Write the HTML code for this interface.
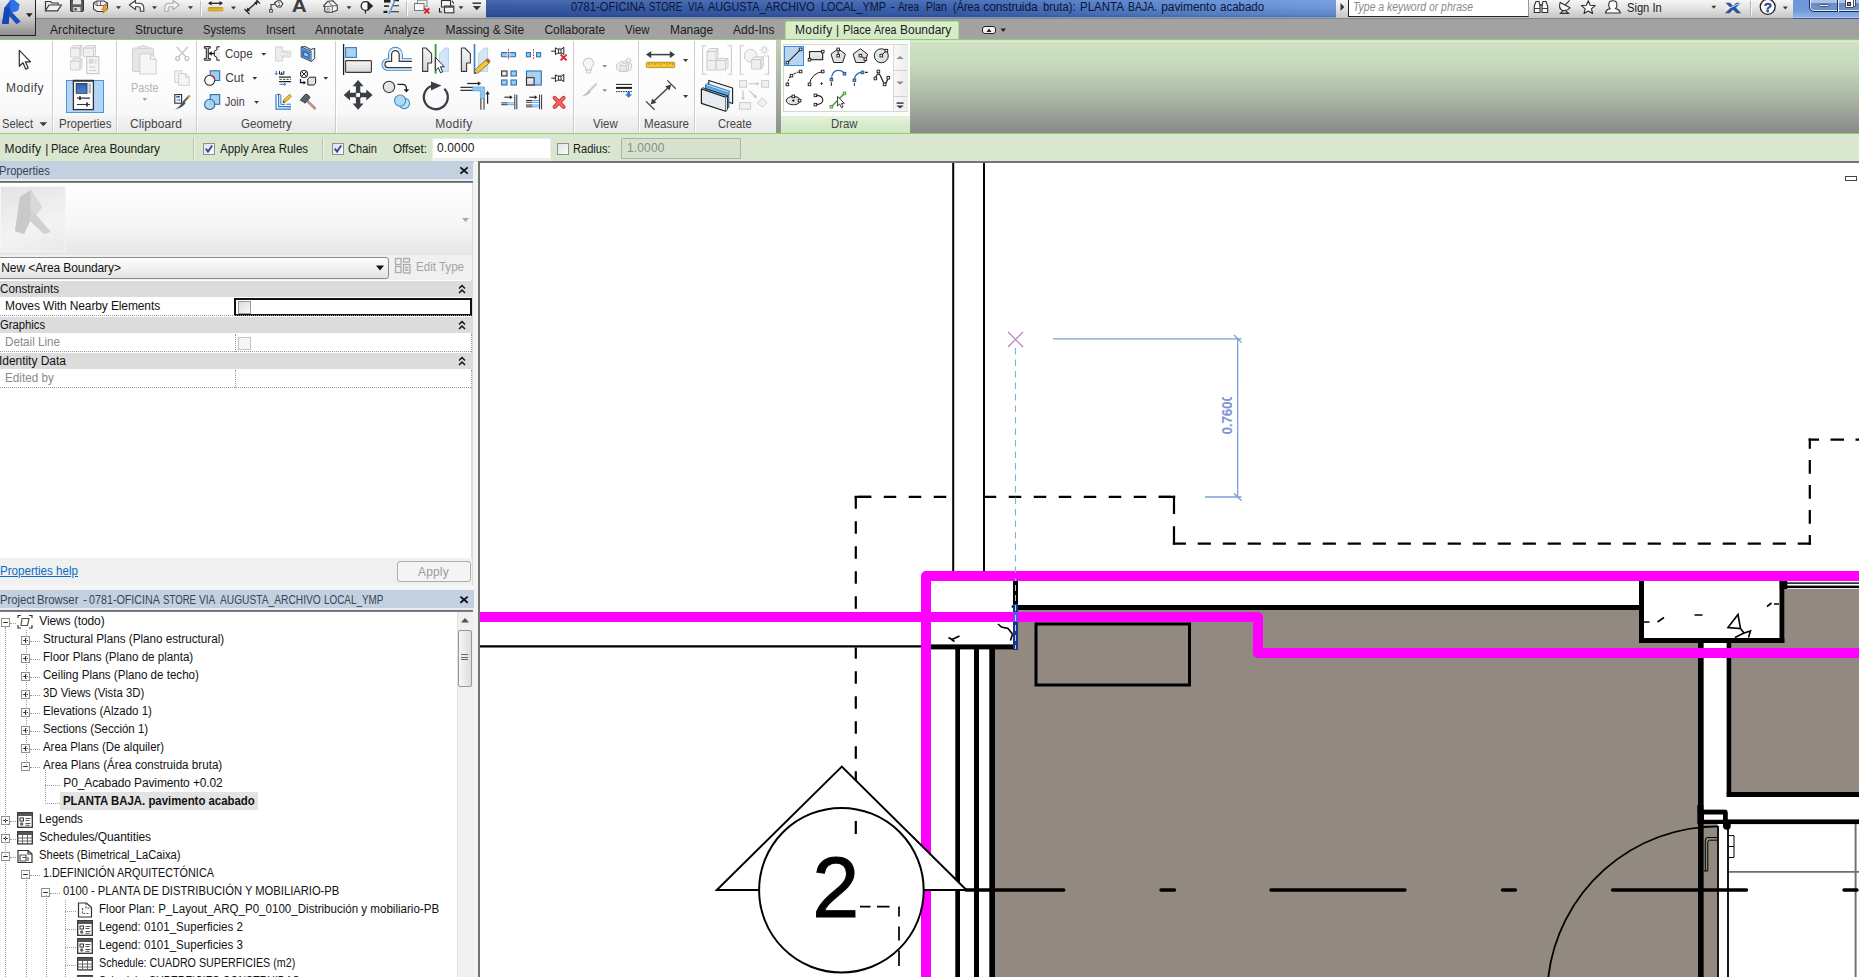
<!DOCTYPE html>
<html><head><meta charset="utf-8"><title>Autodesk Revit</title>
<style>
html,body{margin:0;padding:0;}
body{width:1859px;height:977px;overflow:hidden;position:relative;background:#fff;font-family:"Liberation Sans",sans-serif;}
.t{position:absolute;white-space:nowrap;}
svg{position:absolute;overflow:hidden;}
svg text{font-family:"Liberation Sans",sans-serif;}
</style></head><body>
<div style="position:absolute;left:0px;top:0px;width:1859px;height:18px;background:linear-gradient(#f6f6f6,#e4e4e4 45%,#c4c4c4);"></div>
<div style="position:absolute;left:0px;top:18px;width:1859px;height:22px;background:#a2a2a2;"></div>
<div style="position:absolute;left:0px;top:18px;width:1859px;height:1px;background:#858585;"></div>
<div style="position:absolute;left:486px;top:0px;width:850px;height:18px;background:linear-gradient(90deg,#3558a4 0%,#3b62b0 55%,#5d8ad2 85%,#6c97da 100%);"></div>
<div style="position:absolute;left:486px;top:0px;width:850px;height:18px;background:linear-gradient(rgba(255,255,255,.10),rgba(255,255,255,0) 45%,rgba(0,0,30,.10) 80%,rgba(0,0,40,.28));"></div>
<div style="position:absolute;left:486px;top:16.6px;width:850px;height:1.4px;background:#8fb0e4;opacity:.75;"></div>
<span class="t" style="left:570.80px;top:-1.00px;font-size:12px;line-height:16px;color:#0c1530;transform:scaleX(0.9352);transform-origin:0 0;">0781-OFICINA</span>
<span class="t" style="left:649.20px;top:-1.00px;font-size:12px;line-height:16px;color:#0c1530;transform:scaleX(0.8100);transform-origin:0 0;">STORE</span>
<span class="t" style="left:687.50px;top:-1.00px;font-size:12px;line-height:16px;color:#0c1530;transform:scaleX(0.8175);transform-origin:0 0;">VIA</span>
<span class="t" style="left:708.30px;top:-1.00px;font-size:12px;line-height:16px;color:#0c1530;transform:scaleX(0.9008);transform-origin:0 0;">AUGUSTA_ARCHIVO</span>
<span class="t" style="left:820.80px;top:-1.00px;font-size:12px;line-height:16px;color:#0c1530;transform:scaleX(0.9026);transform-origin:0 0;">LOCAL_YMP</span>
<span class="t" style="left:890.80px;top:-1.00px;font-size:12px;line-height:16px;color:#0c1530;">-</span>
<span class="t" style="left:898.30px;top:-1.00px;font-size:12px;line-height:16px;color:#0c1530;transform:scaleX(0.8247);transform-origin:0 0;">Area</span>
<span class="t" style="left:925.80px;top:-1.00px;font-size:12px;line-height:16px;color:#0c1530;transform:scaleX(0.8703);transform-origin:0 0;">Plan</span>
<span class="t" style="left:952.50px;top:-1.00px;font-size:12px;line-height:16px;color:#0c1530;transform:scaleX(0.9099);transform-origin:0 0;">(Área</span>
<span class="t" style="left:983.30px;top:-1.00px;font-size:12px;line-height:16px;color:#0c1530;letter-spacing:-0.116px;">construida</span>
<span class="t" style="left:1042.50px;top:-1.00px;font-size:12px;line-height:16px;color:#0c1530;transform:scaleX(0.9374);transform-origin:0 0;">bruta):</span>
<span class="t" style="left:1079.60px;top:-1.00px;font-size:12px;line-height:16px;color:#0c1530;transform:scaleX(0.9589);transform-origin:0 0;">PLANTA</span>
<span class="t" style="left:1127.80px;top:-1.00px;font-size:12px;line-height:16px;color:#0c1530;transform:scaleX(0.8731);transform-origin:0 0;">BAJA.</span>
<span class="t" style="left:1161.20px;top:-1.00px;font-size:12px;line-height:16px;color:#0c1530;letter-spacing:-0.062px;">pavimento</span>
<span class="t" style="left:1220.40px;top:-1.00px;font-size:12px;line-height:16px;color:#0c1530;transform:scaleX(0.9580);transform-origin:0 0;">acabado</span>
<div style="position:absolute;left:1348px;top:-2px;width:179px;height:17px;background:#fff;border:1px solid #222;border-right-color:#999;"></div>
<span class="t" style="left:1353.00px;top:-1.00px;font-size:12px;line-height:16px;color:#8a8a8a;transform:scaleX(0.8707);transform-origin:0 0;font-style:italic;">Type a keyword or phrase</span>
<span class="t" style="left:1626.70px;top:0.00px;font-size:12px;line-height:16px;color:#1a1a1a;transform:scaleX(0.9292);transform-origin:0 0;">Sign In</span>
<div style="position:absolute;left:1792.5px;top:0px;width:66.5px;height:18px;background:linear-gradient(#6d95d7,#6f98d9 55%,#8db1e6 92%,#b9d0f0);"></div>
<div style="position:absolute;left:1792.5px;top:18px;width:66.5px;height:1px;background:#3c5a94;"></div>
<div style="position:absolute;left:1808.8px;top:-6px;width:60px;height:18.4px;border:1px solid #1e2f56;border-radius:5px;background:linear-gradient(#b4c9ea 0,#a9c0e5 50%,#6a8bc4 51%,#7194cc);box-shadow:inset 0 0 0 1px rgba(255,255,255,.75);box-sizing:border-box;"></div>
<div style="position:absolute;left:1837.2px;top:0px;width:1px;height:11.5px;background:#1e2f56;"></div>
<div style="position:absolute;left:1838.2px;top:0px;width:1px;height:11.5px;background:rgba(255,255,255,.8);"></div>
<div style="position:absolute;left:1818.7px;top:3.6px;width:10.8px;height:3.9px;background:#fff;border:1px solid #3b4a68;border-radius:1.5px;box-sizing:border-box;"></div>
<div style="position:absolute;left:1848.2px;top:-3px;width:8px;height:10.2px;background:#fff;border:1px solid #3b4a68;border-radius:1px;box-sizing:border-box;"></div>
<div style="position:absolute;left:1845px;top:-3px;width:9px;height:11.2px;background:#fff;border:1px solid #3b4a68;border-radius:1px;box-sizing:border-box;"></div>
<div style="position:absolute;left:1847.4px;top:2.2px;width:3.6px;height:3.6px;background:#8a8a8a;border:1px solid #333;box-sizing:border-box;"></div>
<div style="position:absolute;left:0px;top:0px;width:35px;height:35px;background:linear-gradient(#e9e9e9,#cfcfcf 45%,#8f8f8f);border-right:1px solid #222;border-bottom:1px solid #222;"></div>
<span class="t" style="left:50.00px;top:22.00px;font-size:12px;line-height:16px;color:#1c1c1c;letter-spacing:0.082px;">Architecture</span>
<span class="t" style="left:135.00px;top:22.00px;font-size:12px;line-height:16px;color:#1c1c1c;letter-spacing:-0.075px;">Structure</span>
<span class="t" style="left:203.00px;top:22.00px;font-size:12px;line-height:16px;color:#1c1c1c;transform:scaleX(0.9239);transform-origin:0 0;">Systems</span>
<span class="t" style="left:265.50px;top:22.00px;font-size:12px;line-height:16px;color:#1c1c1c;transform:scaleX(0.9667);transform-origin:0 0;">Insert</span>
<span class="t" style="left:315.00px;top:22.00px;font-size:12px;line-height:16px;color:#1c1c1c;letter-spacing:0.123px;">Annotate</span>
<span class="t" style="left:384.00px;top:22.00px;font-size:12px;line-height:16px;color:#1c1c1c;transform:scaleX(0.9488);transform-origin:0 0;">Analyze</span>
<span class="t" style="left:445.50px;top:22.00px;font-size:12px;line-height:16px;color:#1c1c1c;letter-spacing:-0.108px;">Massing &amp; Site</span>
<span class="t" style="left:544.50px;top:22.00px;font-size:12px;line-height:16px;color:#1c1c1c;letter-spacing:-0.080px;">Collaborate</span>
<span class="t" style="left:625.00px;top:22.00px;font-size:12px;line-height:16px;color:#1c1c1c;transform:scaleX(0.9497);transform-origin:0 0;">View</span>
<span class="t" style="left:670.00px;top:22.00px;font-size:12px;line-height:16px;color:#1c1c1c;letter-spacing:-0.060px;">Manage</span>
<span class="t" style="left:733.00px;top:22.00px;font-size:12px;line-height:16px;color:#1c1c1c;letter-spacing:0.022px;">Add-Ins</span>
<div style="position:absolute;left:785px;top:21px;width:174px;height:19px;background:linear-gradient(#d9efcd,#d2e9c5);border:1.5px solid #a5e187;border-bottom:none;border-radius:2px 2px 0 0;box-sizing:border-box;"></div>
<span class="t" style="left:795.00px;top:22.00px;font-size:12px;line-height:16px;color:#1c1c1c;letter-spacing:0.359px;">Modify</span>
<span class="t" style="left:836.00px;top:22.00px;font-size:12px;line-height:16px;color:#1c1c1c;">|</span>
<span class="t" style="left:842.50px;top:22.00px;font-size:12px;line-height:16px;color:#1c1c1c;transform:scaleX(0.9328);transform-origin:0 0;">Place</span>
<span class="t" style="left:873.80px;top:22.00px;font-size:12px;line-height:16px;color:#1c1c1c;transform:scaleX(0.8878);transform-origin:0 0;">Area</span>
<span class="t" style="left:900.00px;top:22.00px;font-size:12px;line-height:16px;color:#1c1c1c;letter-spacing:-0.007px;">Boundary</span>
<div style="position:absolute;left:982px;top:26px;width:14px;height:8px;background:#f4f4f4;border:1px solid #222;border-radius:3px;box-sizing:border-box;"></div>
<svg style="left:980px;top:24px" width="30" height="12"><path d="M6.5 8 L9 4.5 L11.5 8Z" fill="#222"/><path d="M20.5 4.5 L26 4.5 L23.2 8Z" fill="#222"/></svg>
<div style="position:absolute;left:0px;top:38.6px;width:1859px;height:1.6px;background:linear-gradient(#9db894,#92d06f);"></div>
<div style="position:absolute;left:0px;top:40px;width:1859px;height:93px;background:linear-gradient(#d0e5c4 0%,#c6d9bc 25%,#b1bfaa 55%,#9aa197 80%,#8a8a8a 100%);"></div>
<div style="position:absolute;left:0px;top:40.5px;width:1859px;height:1px;background:#dcefd2;"></div>
<div style="position:absolute;left:0px;top:40px;width:776px;height:93px;background:linear-gradient(#ffffff,#fbfbfb 60%,#f4f4f4);"></div>
<div style="position:absolute;left:0px;top:116px;width:776px;height:17px;background:linear-gradient(#f3f3f3,#e9e9e9);"></div>
<div style="position:absolute;left:51.5px;top:41px;width:1px;height:92px;background:#cdcdcd;"></div>
<div style="position:absolute;left:52.5px;top:41px;width:1px;height:92px;background:#ffffff;"></div>
<div style="position:absolute;left:115.5px;top:41px;width:1px;height:92px;background:#cdcdcd;"></div>
<div style="position:absolute;left:116.5px;top:41px;width:1px;height:92px;background:#ffffff;"></div>
<div style="position:absolute;left:195.5px;top:41px;width:1px;height:92px;background:#cdcdcd;"></div>
<div style="position:absolute;left:196.5px;top:41px;width:1px;height:92px;background:#ffffff;"></div>
<div style="position:absolute;left:334.5px;top:41px;width:1px;height:92px;background:#cdcdcd;"></div>
<div style="position:absolute;left:335.5px;top:41px;width:1px;height:92px;background:#ffffff;"></div>
<div style="position:absolute;left:573.0px;top:41px;width:1px;height:92px;background:#cdcdcd;"></div>
<div style="position:absolute;left:574.0px;top:41px;width:1px;height:92px;background:#ffffff;"></div>
<div style="position:absolute;left:638.0px;top:41px;width:1px;height:92px;background:#cdcdcd;"></div>
<div style="position:absolute;left:639.0px;top:41px;width:1px;height:92px;background:#ffffff;"></div>
<div style="position:absolute;left:694.0px;top:41px;width:1px;height:92px;background:#cdcdcd;"></div>
<div style="position:absolute;left:695.0px;top:41px;width:1px;height:92px;background:#ffffff;"></div>
<div style="position:absolute;left:776px;top:40px;width:5px;height:93px;background:linear-gradient(#bfd0b6,#a8b3a2 50%,#8f918e);"></div>
<div style="position:absolute;left:781px;top:40px;width:129px;height:93px;background:#fbfdf9;"></div>
<div style="position:absolute;left:781px;top:116px;width:129px;height:17px;background:linear-gradient(#e3f2da,#cfe6c1);"></div>
<div style="position:absolute;left:782.5px;top:44px;width:125.5px;height:67.5px;background:#fff;border:1px solid #d6d6d6;box-sizing:border-box;"></div>
<div style="position:absolute;left:893px;top:45px;width:14px;height:65.5px;background:linear-gradient(90deg,#f8f8f8,#ececec);border-left:1px solid #dcdcdc;"></div>
<div style="position:absolute;left:893px;top:69.5px;width:14px;height:1px;background:#d0d0d0;"></div>
<div style="position:absolute;left:893px;top:96px;width:14px;height:1px;background:#d0d0d0;"></div>
<div style="position:absolute;left:784px;top:46px;width:20px;height:20px;background:#b8d6f2;border:1px solid #3c8ad8;box-sizing:border-box;"></div>
<div style="position:absolute;left:66px;top:79.5px;width:38px;height:33.5px;background:#b4d5f5;border:1px solid #4a96de;box-sizing:border-box;"></div>
<div style="position:absolute;left:0px;top:132.5px;width:1859px;height:1.5px;background:#8fd46b;"></div>
<span class="t" style="left:2.00px;top:116.00px;font-size:12px;line-height:16px;color:#454545;transform:scaleX(0.9297);transform-origin:0 0;">Select</span>
<span class="t" style="left:58.50px;top:116.00px;font-size:12px;line-height:16px;color:#454545;transform:scaleX(0.9600);transform-origin:0 0;">Properties</span>
<span class="t" style="left:130.00px;top:116.00px;font-size:12px;line-height:16px;color:#454545;letter-spacing:0.069px;">Clipboard</span>
<span class="t" style="left:240.80px;top:116.00px;font-size:12px;line-height:16px;color:#454545;transform:scaleX(0.9664);transform-origin:0 0;">Geometry</span>
<span class="t" style="left:435.30px;top:116.00px;font-size:12px;line-height:16px;color:#454545;letter-spacing:0.309px;">Modify</span>
<span class="t" style="left:593.30px;top:116.00px;font-size:12px;line-height:16px;color:#454545;transform:scaleX(0.9575);transform-origin:0 0;">View</span>
<span class="t" style="left:644.00px;top:116.00px;font-size:12px;line-height:16px;color:#454545;transform:scaleX(0.9639);transform-origin:0 0;">Measure</span>
<span class="t" style="left:718.30px;top:116.00px;font-size:12px;line-height:16px;color:#454545;transform:scaleX(0.9357);transform-origin:0 0;">Create</span>
<span class="t" style="left:831.30px;top:116.00px;font-size:12px;line-height:16px;color:#454545;transform:scaleX(0.9459);transform-origin:0 0;">Draw</span>
<span class="t" style="left:6.00px;top:80.00px;font-size:12px;line-height:16px;color:#404040;letter-spacing:0.443px;">Modify</span>
<span class="t" style="left:130.50px;top:80.00px;font-size:12px;line-height:16px;color:#b4b4b4;transform:scaleX(0.8966);transform-origin:0 0;">Paste</span>
<span class="t" style="left:225.30px;top:46.20px;font-size:12px;line-height:16px;color:#404040;transform:scaleX(0.9656);transform-origin:0 0;">Cope</span>
<span class="t" style="left:225.30px;top:70.00px;font-size:12px;line-height:16px;color:#404040;letter-spacing:-0.091px;">Cut</span>
<span class="t" style="left:225.30px;top:94.00px;font-size:12px;line-height:16px;color:#404040;transform:scaleX(0.8948);transform-origin:0 0;">Join</span>
<div style="position:absolute;left:0px;top:134px;width:1859px;height:28px;background:#d9e6d0;"></div>
<div style="position:absolute;left:432px;top:159px;width:118.5px;height:2px;background:#eef3ea;"></div>
<span class="t" style="left:4.40px;top:141.00px;font-size:12px;line-height:16px;color:#1a1a1a;letter-spacing:0.259px;">Modify</span>
<span class="t" style="left:45.30px;top:141.00px;font-size:12px;line-height:16px;color:#1a1a1a;">|</span>
<span class="t" style="left:51.30px;top:141.00px;font-size:12px;line-height:16px;color:#1a1a1a;transform:scaleX(0.9362);transform-origin:0 0;">Place</span>
<span class="t" style="left:82.50px;top:141.00px;font-size:12px;line-height:16px;color:#1a1a1a;transform:scaleX(0.9115);transform-origin:0 0;">Area</span>
<span class="t" style="left:109.40px;top:141.00px;font-size:12px;line-height:16px;color:#1a1a1a;letter-spacing:-0.095px;">Boundary</span>
<div style="position:absolute;left:193px;top:138px;width:1px;height:21px;background:#b7c4ae;"></div>
<div style="position:absolute;left:194px;top:138px;width:1px;height:21px;background:#eef5ea;"></div>
<div style="position:absolute;left:322px;top:138px;width:1px;height:21px;background:#b7c4ae;"></div>
<div style="position:absolute;left:323px;top:138px;width:1px;height:21px;background:#eef5ea;"></div>
<div style="position:absolute;left:203px;top:142.5px;width:12px;height:12px;background:linear-gradient(135deg,#dfe3e8,#fbfbfb);border:1px solid #8e8f8f;box-sizing:border-box;"></div>
<svg style="left:203px;top:142.5px" width="12" height="12"><path d="M2.8 5.6 L5 8.6 L9.2 2.6" stroke="#31479a" stroke-width="1.8" fill="none"/></svg>
<span class="t" style="left:219.50px;top:141.00px;font-size:12px;line-height:16px;color:#1a1a1a;transform:scaleX(0.9560);transform-origin:0 0;">Apply Area Rules</span>
<div style="position:absolute;left:332px;top:142.5px;width:12px;height:12px;background:linear-gradient(135deg,#dfe3e8,#fbfbfb);border:1px solid #8e8f8f;box-sizing:border-box;"></div>
<svg style="left:332px;top:142.5px" width="12" height="12"><path d="M2.8 5.6 L5 8.6 L9.2 2.6" stroke="#31479a" stroke-width="1.8" fill="none"/></svg>
<span class="t" style="left:348.00px;top:141.00px;font-size:12px;line-height:16px;color:#1a1a1a;transform:scaleX(0.9248);transform-origin:0 0;">Chain</span>
<span class="t" style="left:393.00px;top:141.00px;font-size:12px;line-height:16px;color:#1a1a1a;transform:scaleX(0.9688);transform-origin:0 0;">Offset:</span>
<div style="position:absolute;left:432px;top:137.5px;width:118.5px;height:21.5px;background:#fff;border:1px solid #e6efe0;box-sizing:border-box;"></div>
<span class="t" style="left:437.00px;top:140.00px;font-size:12px;line-height:16px;color:#1a1a1a;letter-spacing:0.135px;">0.0000</span>
<div style="position:absolute;left:557px;top:142.5px;width:12px;height:12px;background:linear-gradient(135deg,#dfe3e8,#fbfbfb);border:1px solid #8e8f8f;box-sizing:border-box;"></div>
<span class="t" style="left:573.00px;top:141.00px;font-size:12px;line-height:16px;color:#1a1a1a;transform:scaleX(0.9217);transform-origin:0 0;">Radius:</span>
<div style="position:absolute;left:621px;top:137.5px;width:119.5px;height:21.5px;background:#d6e2ce;border:1px solid #aab5a3;box-sizing:border-box;border-radius:1px;"></div>
<span class="t" style="left:627.00px;top:140.00px;font-size:12px;line-height:16px;color:#8c8c8c;letter-spacing:0.135px;">1.0000</span>
<div style="position:absolute;left:0px;top:163px;width:479px;height:814px;background:#f0f0f0;"></div>
<div style="position:absolute;left:0px;top:161px;width:473.6px;height:18.3px;background:#c2d0e0;"></div>
<div style="position:absolute;left:0px;top:179.3px;width:473.6px;height:1.4px;background:#e6ecf2;"></div>
<div style="position:absolute;left:0px;top:180.7px;width:472.7px;height:2px;background:linear-gradient(#5f6266,#8a8d90);"></div>
<span class="t" style="left:-0.80px;top:163.00px;font-size:12px;line-height:16px;color:#3a4452;transform:scaleX(0.9289);transform-origin:0 0;">Properties</span>
<svg style="left:458px;top:165px" width="12" height="12"><path d="M2.4 2.4 L9.7 8.6 M9.7 2.4 L2.4 8.6" stroke="#111" stroke-width="1.9"/></svg>
<div style="position:absolute;left:0px;top:182.5px;width:472px;height:375px;background:#fff;"></div>
<div style="position:absolute;left:471.3px;top:182.7px;width:1.4px;height:407px;background:#dadada;"></div>
<div style="position:absolute;left:473px;top:163px;width:6px;height:814px;background:#f3f3f3;"></div>
<div style="position:absolute;left:0px;top:183px;width:472px;height:71.5px;background:linear-gradient(#ffffff,#f5f5f5 60%,#e6e6e6);"></div>
<div style="position:absolute;left:0px;top:185.5px;width:66px;height:66.5px;background:linear-gradient(160deg,#e3e3e3,#f3f3f3 60%,#e9e9e9);border:1px solid #f6f6f6;box-sizing:border-box;"></div>
<svg style="left:0px;top:185px" width="66" height="67"><path d="M20 12 L31 5 L42 22 L36 30 L51 47 L44 49 L30 36 L24 49 L15 46 Z" fill="#d0d0d0"/><path d="M20 12 L31 5 L30 36 L24 49 L15 46Z" fill="#c9c9c9"/><path d="M31 5 L42 22 L36 30 L30 24Z" fill="#d8d8d8"/></svg>
<svg style="left:460px;top:216px" width="12" height="8"><path d="M2 2 L9 2 L5.5 6Z" fill="#a8a8a8"/></svg>
<div style="position:absolute;left:0px;top:254.5px;width:472px;height:25px;background:#f0f0f0;"></div>
<div style="position:absolute;left:-3px;top:256.5px;width:392px;height:22.5px;background:linear-gradient(#ffffff,#f1f1f1 50%,#e2e2e2);border:1px solid #8a8a8a;border-radius:3px;box-sizing:border-box;"></div>
<span class="t" style="left:1.30px;top:260.30px;font-size:12px;line-height:16px;color:#111;letter-spacing:-0.100px;">New &lt;Area Boundary&gt;</span>
<svg style="left:374px;top:264px" width="12" height="8"><path d="M2 1.5 L10 1.5 L6 6.5Z" fill="#111"/></svg>
<svg style="left:394px;top:257px" width="18" height="18" fill="none" stroke="#ababab" stroke-width="1.3"><rect x="1.5" y="1.5" width="5.5" height="6"/><rect x="1.5" y="9.5" width="5.5" height="6"/><rect x="9.5" y="1.5" width="6" height="3.5"/><rect x="9.5" y="7.5" width="6.5" height="8.5"/><path d="M11 10.5h3.5M11 13h3.5"/></svg>
<span class="t" style="left:416.00px;top:258.50px;font-size:12px;line-height:16px;color:#a4a4a4;transform:scaleX(0.9639);transform-origin:0 0;">Edit Type</span>
<div style="position:absolute;left:0px;top:281px;width:472px;height:16px;background:#dcdcdc;"></div>
<span class="t" style="left:0.00px;top:280.80px;font-size:12px;line-height:16px;color:#111;transform:scaleX(0.9722);transform-origin:0 0;">Constraints</span>
<svg style="left:457px;top:283px" width="10" height="12"><path d="M2 5.5 L5 2.5 L8 5.5 M2 10 L5 7 L8 10" stroke="#111" stroke-width="1.5" fill="none"/></svg>
<div style="position:absolute;left:0px;top:317px;width:472px;height:16px;background:#dcdcdc;"></div>
<span class="t" style="left:0.00px;top:316.80px;font-size:12px;line-height:16px;color:#111;transform:scaleX(0.9372);transform-origin:0 0;">Graphics</span>
<svg style="left:457px;top:319px" width="10" height="12"><path d="M2 5.5 L5 2.5 L8 5.5 M2 10 L5 7 L8 10" stroke="#111" stroke-width="1.5" fill="none"/></svg>
<div style="position:absolute;left:0px;top:353px;width:472px;height:16px;background:#dcdcdc;"></div>
<span class="t" style="left:-1.00px;top:352.80px;font-size:12px;line-height:16px;color:#111;letter-spacing:-0.042px;">Identity Data</span>
<svg style="left:457px;top:355px" width="10" height="12"><path d="M2 5.5 L5 2.5 L8 5.5 M2 10 L5 7 L8 10" stroke="#111" stroke-width="1.5" fill="none"/></svg>
<div style="position:absolute;left:0px;top:297.5px;width:472px;height:17.5px;background:#fff;"></div>
<span class="t" style="left:5.00px;top:298.20px;font-size:12px;line-height:16px;color:#111;letter-spacing:-0.117px;">Moves With Nearby Elements</span>
<div style="position:absolute;left:234px;top:298.0px;width:237.5px;height:17.5px;border:2px solid #111;box-sizing:border-box;background:#fff;"></div>
<div style="position:absolute;left:0px;top:315.0px;width:471px;height:1px;border-top:1px dotted #9a9a9a;"></div>
<div style="position:absolute;left:238px;top:301.0px;width:13px;height:12.5px;background:linear-gradient(135deg,#d9dde2,#f9f9f9);border:1px solid #9a9a9a;box-sizing:border-box;"></div>
<div style="position:absolute;left:0px;top:333.5px;width:472px;height:17.5px;background:#fff;"></div>
<span class="t" style="left:5.00px;top:334.20px;font-size:12px;line-height:16px;color:#8a8a8a;transform:scaleX(0.9700);transform-origin:0 0;">Detail Line</span>
<div style="position:absolute;left:234.5px;top:333.5px;width:1px;height:18px;border-left:1px dotted #9a9a9a;"></div>
<div style="position:absolute;left:470.5px;top:333.5px;width:1px;height:18px;border-left:1px dotted #9a9a9a;"></div>
<div style="position:absolute;left:0px;top:351.0px;width:471px;height:1px;border-top:1px dotted #9a9a9a;"></div>
<div style="position:absolute;left:238px;top:337.0px;width:13px;height:12.5px;background:#f6f6f6;border:1px solid #c4c4c4;box-sizing:border-box;"></div>
<div style="position:absolute;left:0px;top:369.5px;width:472px;height:17.5px;background:#fff;"></div>
<span class="t" style="left:5.00px;top:370.20px;font-size:12px;line-height:16px;color:#8a8a8a;transform:scaleX(0.9737);transform-origin:0 0;">Edited by</span>
<div style="position:absolute;left:234.5px;top:369.5px;width:1px;height:18px;border-left:1px dotted #9a9a9a;"></div>
<div style="position:absolute;left:470.5px;top:369.5px;width:1px;height:18px;border-left:1px dotted #9a9a9a;"></div>
<div style="position:absolute;left:0px;top:387.0px;width:471px;height:1px;border-top:1px dotted #9a9a9a;"></div>
<div style="position:absolute;left:0px;top:558.3px;width:472px;height:27px;background:#f0f0f0;"></div>
<div style="position:absolute;left:0px;top:585px;width:473.6px;height:5px;background:#f6f6f6;"></div>
<span class="t" style="left:0.00px;top:563.00px;font-size:12px;line-height:16px;color:#0b6ac2;transform:scaleX(0.9665);transform-origin:0 0;text-decoration:underline;">Properties help</span>
<div style="position:absolute;left:397px;top:561px;width:73.5px;height:21px;background:#f4f4f4;border:1px solid #adadad;border-radius:3px;box-sizing:border-box;"></div>
<span class="t" style="left:418.00px;top:564.00px;font-size:12px;line-height:16px;color:#9a9a9a;letter-spacing:0.157px;">Apply</span>
<div style="position:absolute;left:0px;top:590px;width:473.6px;height:17.8px;background:#c2d0e0;"></div>
<div style="position:absolute;left:0px;top:607.8px;width:473.6px;height:2px;background:#e6ecf2;"></div>
<div style="position:absolute;left:0px;top:609.8px;width:472.7px;height:2px;background:linear-gradient(#5f6266,#8a8d90);"></div>
<span class="t" style="left:0.00px;top:592.00px;font-size:12px;line-height:16px;color:#3a4452;transform:scaleX(0.9346);transform-origin:0 0;">Project</span>
<span class="t" style="left:37.40px;top:592.00px;font-size:12px;line-height:16px;color:#3a4452;transform:scaleX(0.9406);transform-origin:0 0;">Browser</span>
<span class="t" style="left:83.00px;top:592.00px;font-size:12px;line-height:16px;color:#3a4452;">-</span>
<span class="t" style="left:88.60px;top:592.00px;font-size:12px;line-height:16px;color:#3a4452;transform:scaleX(0.8948);transform-origin:0 0;">0781-OFICINA</span>
<span class="t" style="left:163.20px;top:592.00px;font-size:12px;line-height:16px;color:#3a4452;transform:scaleX(0.8027);transform-origin:0 0;">STORE</span>
<span class="t" style="left:199.30px;top:592.00px;font-size:12px;line-height:16px;color:#3a4452;transform:scaleX(0.8433);transform-origin:0 0;">VIA</span>
<span class="t" style="left:219.50px;top:592.00px;font-size:12px;line-height:16px;color:#3a4452;transform:scaleX(0.8501);transform-origin:0 0;">AUGUSTA_ARCHIVO</span>
<span class="t" style="left:324.00px;top:592.00px;font-size:12px;line-height:16px;color:#3a4452;transform:scaleX(0.8248);transform-origin:0 0;">LOCAL_YMP</span>
<svg style="left:458px;top:594px" width="12" height="12"><path d="M2.4 2.6 L9.7 8.8 M9.7 2.6 L2.4 8.8" stroke="#111" stroke-width="1.9"/></svg>
<div style="position:absolute;left:0px;top:611.5px;width:456.5px;height:366px;background:#fff;"></div>
<div style="position:absolute;left:456.5px;top:611.5px;width:16px;height:366px;background:#f0f0f0;border-left:1px solid #e2e2e2;box-sizing:border-box;"></div>
<svg style="left:459px;top:616px" width="12" height="8"><path d="M2 6.5 L6 2 L10 6.5Z" fill="#505050"/></svg>
<div style="position:absolute;left:457.5px;top:630px;width:14px;height:57px;background:linear-gradient(90deg,#f6f6f6,#dcdcdc);border:1px solid #979797;border-radius:2px;box-sizing:border-box;"></div>
<div style="position:absolute;left:461px;top:654.0px;width:7px;height:1px;background:#6a6a6a;"></div>
<div style="position:absolute;left:461px;top:656.6px;width:7px;height:1px;background:#6a6a6a;"></div>
<div style="position:absolute;left:461px;top:659.2px;width:7px;height:1px;background:#6a6a6a;"></div>
<span class="t" style="left:39.20px;top:613.00px;font-size:12px;line-height:16px;color:#111;letter-spacing:-0.089px;">Views (todo)</span>
<div style="position:absolute;left:10px;top:622.5px;width:6px;height:1px;border-top:1px dotted #9c9c9c;"></div>
<svg style="left:1px;top:618.0px" width="9" height="9"><rect x="0.5" y="0.5" width="8" height="8" fill="#fcfcfc" stroke="#8f8f8f"/><path d="M2.2 4.5h4.6" stroke="#2a2a2a" stroke-width="1"/></svg>
<svg style="left:17px;top:613.5px" width="16" height="16" fill="none" stroke="#333" stroke-width="1.2"><path d="M1 4V1.5h3M12 1.5h3V4M15 11v3h-3M4 14H1v-3"/><path d="M5 4.5h7l-1.5 7h-6.5z" stroke="#555"/></svg>
<span class="t" style="left:43.40px;top:631.00px;font-size:12px;line-height:16px;color:#111;transform:scaleX(0.9739);transform-origin:0 0;">Structural Plans (Plano estructural)</span>
<div style="position:absolute;left:30px;top:640.5px;width:10.399999999999999px;height:1px;border-top:1px dotted #9c9c9c;"></div>
<svg style="left:21px;top:636.0px" width="9" height="9"><rect x="0.5" y="0.5" width="8" height="8" fill="#fcfcfc" stroke="#8f8f8f"/><path d="M2.2 4.5h4.6 M4.5 2.2v4.6" stroke="#2a2a2a" stroke-width="1"/></svg>
<span class="t" style="left:43.40px;top:649.00px;font-size:12px;line-height:16px;color:#111;transform:scaleX(0.9666);transform-origin:0 0;">Floor Plans (Plano de planta)</span>
<div style="position:absolute;left:30px;top:658.5px;width:10.399999999999999px;height:1px;border-top:1px dotted #9c9c9c;"></div>
<svg style="left:21px;top:654.0px" width="9" height="9"><rect x="0.5" y="0.5" width="8" height="8" fill="#fcfcfc" stroke="#8f8f8f"/><path d="M2.2 4.5h4.6 M4.5 2.2v4.6" stroke="#2a2a2a" stroke-width="1"/></svg>
<span class="t" style="left:43.40px;top:667.00px;font-size:12px;line-height:16px;color:#111;transform:scaleX(0.9659);transform-origin:0 0;">Ceiling Plans (Plano de techo)</span>
<div style="position:absolute;left:30px;top:676.5px;width:10.399999999999999px;height:1px;border-top:1px dotted #9c9c9c;"></div>
<svg style="left:21px;top:672.0px" width="9" height="9"><rect x="0.5" y="0.5" width="8" height="8" fill="#fcfcfc" stroke="#8f8f8f"/><path d="M2.2 4.5h4.6 M4.5 2.2v4.6" stroke="#2a2a2a" stroke-width="1"/></svg>
<span class="t" style="left:43.40px;top:685.00px;font-size:12px;line-height:16px;color:#111;transform:scaleX(0.9465);transform-origin:0 0;">3D Views (Vista 3D)</span>
<div style="position:absolute;left:30px;top:694.5px;width:10.399999999999999px;height:1px;border-top:1px dotted #9c9c9c;"></div>
<svg style="left:21px;top:690.0px" width="9" height="9"><rect x="0.5" y="0.5" width="8" height="8" fill="#fcfcfc" stroke="#8f8f8f"/><path d="M2.2 4.5h4.6 M4.5 2.2v4.6" stroke="#2a2a2a" stroke-width="1"/></svg>
<span class="t" style="left:43.40px;top:703.00px;font-size:12px;line-height:16px;color:#111;transform:scaleX(0.9605);transform-origin:0 0;">Elevations (Alzado 1)</span>
<div style="position:absolute;left:30px;top:712.5px;width:10.399999999999999px;height:1px;border-top:1px dotted #9c9c9c;"></div>
<svg style="left:21px;top:708.0px" width="9" height="9"><rect x="0.5" y="0.5" width="8" height="8" fill="#fcfcfc" stroke="#8f8f8f"/><path d="M2.2 4.5h4.6 M4.5 2.2v4.6" stroke="#2a2a2a" stroke-width="1"/></svg>
<span class="t" style="left:43.40px;top:721.00px;font-size:12px;line-height:16px;color:#111;transform:scaleX(0.9552);transform-origin:0 0;">Sections (Sección 1)</span>
<div style="position:absolute;left:30px;top:730.5px;width:10.399999999999999px;height:1px;border-top:1px dotted #9c9c9c;"></div>
<svg style="left:21px;top:726.0px" width="9" height="9"><rect x="0.5" y="0.5" width="8" height="8" fill="#fcfcfc" stroke="#8f8f8f"/><path d="M2.2 4.5h4.6 M4.5 2.2v4.6" stroke="#2a2a2a" stroke-width="1"/></svg>
<span class="t" style="left:43.40px;top:739.00px;font-size:12px;line-height:16px;color:#111;transform:scaleX(0.9506);transform-origin:0 0;">Area Plans (De alquiler)</span>
<div style="position:absolute;left:30px;top:748.5px;width:10.399999999999999px;height:1px;border-top:1px dotted #9c9c9c;"></div>
<svg style="left:21px;top:744.0px" width="9" height="9"><rect x="0.5" y="0.5" width="8" height="8" fill="#fcfcfc" stroke="#8f8f8f"/><path d="M2.2 4.5h4.6 M4.5 2.2v4.6" stroke="#2a2a2a" stroke-width="1"/></svg>
<span class="t" style="left:43.40px;top:757.00px;font-size:12px;line-height:16px;color:#111;transform:scaleX(0.9701);transform-origin:0 0;">Area Plans (Área construida bruta)</span>
<div style="position:absolute;left:30px;top:766.5px;width:10.399999999999999px;height:1px;border-top:1px dotted #9c9c9c;"></div>
<svg style="left:21px;top:762.0px" width="9" height="9"><rect x="0.5" y="0.5" width="8" height="8" fill="#fcfcfc" stroke="#8f8f8f"/><path d="M2.2 4.5h4.6" stroke="#2a2a2a" stroke-width="1"/></svg>
<span class="t" style="left:63.30px;top:775.00px;font-size:12px;line-height:16px;color:#111;letter-spacing:-0.119px;">P0_Acabado Pavimento +0.02</span>
<div style="position:absolute;left:45px;top:784.5px;width:15px;height:1px;border-top:1px dotted #9c9c9c;"></div>
<div style="position:absolute;left:60px;top:792.0px;width:198px;height:18px;background:#e3e3e3;"></div>
<span class="t" style="left:63.30px;top:793.00px;font-size:12px;line-height:16px;color:#111;transform:scaleX(0.9489);transform-origin:0 0;font-weight:bold;">PLANTA BAJA. pavimento acabado</span>
<div style="position:absolute;left:45px;top:802.5px;width:15px;height:1px;border-top:1px dotted #9c9c9c;"></div>
<span class="t" style="left:39.20px;top:811.00px;font-size:12px;line-height:16px;color:#111;transform:scaleX(0.9515);transform-origin:0 0;">Legends</span>
<div style="position:absolute;left:10px;top:820.5px;width:6px;height:1px;border-top:1px dotted #9c9c9c;"></div>
<svg style="left:1px;top:816.0px" width="9" height="9"><rect x="0.5" y="0.5" width="8" height="8" fill="#fcfcfc" stroke="#8f8f8f"/><path d="M2.2 4.5h4.6 M4.5 2.2v4.6" stroke="#2a2a2a" stroke-width="1"/></svg>
<svg style="left:17px;top:811.5px" width="16" height="16"><rect x="0.7" y="0.7" width="14.6" height="14.6" fill="#fff" stroke="#333" stroke-width="1.3"/><rect x="1" y="1" width="14" height="3" fill="#555"/><rect x="3" y="6" width="3.5" height="3" fill="none" stroke="#333"/><circle cx="4.7" cy="12" r="1.7" fill="#666"/><path d="M8.5 6.5h5M8.5 8.5h4M8.5 11.5h5M8.5 13.3h4" stroke="#555" stroke-width="1"/></svg>
<span class="t" style="left:39.20px;top:829.00px;font-size:12px;line-height:16px;color:#111;letter-spacing:-0.079px;">Schedules/Quantities</span>
<div style="position:absolute;left:10px;top:838.5px;width:6px;height:1px;border-top:1px dotted #9c9c9c;"></div>
<svg style="left:1px;top:834.0px" width="9" height="9"><rect x="0.5" y="0.5" width="8" height="8" fill="#fcfcfc" stroke="#8f8f8f"/><path d="M2.2 4.5h4.6 M4.5 2.2v4.6" stroke="#2a2a2a" stroke-width="1"/></svg>
<svg style="left:17px;top:830.5px" width="16" height="14"><rect x="0.7" y="0.7" width="14.6" height="12.2" fill="#fff" stroke="#333" stroke-width="1.3"/><rect x="1" y="1" width="14" height="3" fill="#555"/><path d="M1 7h14M1 10h14M5.5 4v9M10.5 4v9" stroke="#666" stroke-width="1"/></svg>
<span class="t" style="left:39.20px;top:847.00px;font-size:12px;line-height:16px;color:#111;transform:scaleX(0.9305);transform-origin:0 0;">Sheets (Bimetrical_LaCaixa)</span>
<div style="position:absolute;left:10px;top:856.5px;width:6px;height:1px;border-top:1px dotted #9c9c9c;"></div>
<svg style="left:1px;top:852.0px" width="9" height="9"><rect x="0.5" y="0.5" width="8" height="8" fill="#fcfcfc" stroke="#8f8f8f"/><path d="M2.2 4.5h4.6" stroke="#2a2a2a" stroke-width="1"/></svg>
<svg style="left:17px;top:847.5px" width="16" height="16" fill="none" stroke="#333" stroke-width="1.2"><path d="M1 2.5h10l4 3.5v8.5h-14z" fill="#fff"/><path d="M11 2.5v3.5h4" /><path d="M3 7h6v6h-6zM5.5 9.5h3.5" stroke="#555"/><path d="M11 9v4" stroke="#555"/></svg>
<span class="t" style="left:43.40px;top:865.00px;font-size:12px;line-height:16px;color:#111;transform:scaleX(0.9027);transform-origin:0 0;">1.DEFINICIÓN ARQUITECTÓNICA</span>
<div style="position:absolute;left:30px;top:874.5px;width:10.399999999999999px;height:1px;border-top:1px dotted #9c9c9c;"></div>
<svg style="left:21px;top:870.0px" width="9" height="9"><rect x="0.5" y="0.5" width="8" height="8" fill="#fcfcfc" stroke="#8f8f8f"/><path d="M2.2 4.5h4.6" stroke="#2a2a2a" stroke-width="1"/></svg>
<span class="t" style="left:63.30px;top:883.00px;font-size:12px;line-height:16px;color:#111;transform:scaleX(0.9331);transform-origin:0 0;">0100 - PLANTA DE DISTRIBUCIÓN Y MOBILIARIO-PB</span>
<div style="position:absolute;left:50px;top:892.5px;width:10.299999999999997px;height:1px;border-top:1px dotted #9c9c9c;"></div>
<svg style="left:41px;top:888.0px" width="9" height="9"><rect x="0.5" y="0.5" width="8" height="8" fill="#fcfcfc" stroke="#8f8f8f"/><path d="M2.2 4.5h4.6" stroke="#2a2a2a" stroke-width="1"/></svg>
<span class="t" style="left:99.40px;top:901.00px;font-size:12px;line-height:16px;color:#111;transform:scaleX(0.9640);transform-origin:0 0;">Floor Plan: P_Layout_ARQ_P0_0100_Distribución y mobiliario-PB</span>
<div style="position:absolute;left:65px;top:910.5px;width:11px;height:1px;border-top:1px dotted #9c9c9c;"></div>
<svg style="left:77px;top:901.5px" width="16" height="16" fill="none" stroke="#333" stroke-width="1.2"><path d="M1.5 1h8l5 4.5v9.5h-13z" fill="#fff"/><path d="M9 1v5h5.5" stroke="#555" stroke-dasharray="2 1.2"/><path d="M5.5 6v5.5h6" stroke="#555" stroke-dasharray="2 1.2"/></svg>
<span class="t" style="left:99.40px;top:919.00px;font-size:12px;line-height:16px;color:#111;transform:scaleX(0.9625);transform-origin:0 0;">Legend: 0101_Superficies 2</span>
<div style="position:absolute;left:65px;top:928.5px;width:11px;height:1px;border-top:1px dotted #9c9c9c;"></div>
<svg style="left:77px;top:919.5px" width="16" height="16"><rect x="0.7" y="0.7" width="14.6" height="14.6" fill="#fff" stroke="#333" stroke-width="1.3"/><rect x="1" y="1" width="14" height="3" fill="#555"/><rect x="3" y="6" width="3.5" height="3" fill="none" stroke="#333"/><circle cx="4.7" cy="12" r="1.7" fill="#666"/><path d="M8.5 6.5h5M8.5 8.5h4M8.5 11.5h5M8.5 13.3h4" stroke="#555" stroke-width="1"/></svg>
<span class="t" style="left:99.40px;top:937.00px;font-size:12px;line-height:16px;color:#111;transform:scaleX(0.9625);transform-origin:0 0;">Legend: 0101_Superficies 3</span>
<div style="position:absolute;left:65px;top:946.5px;width:11px;height:1px;border-top:1px dotted #9c9c9c;"></div>
<svg style="left:77px;top:937.5px" width="16" height="16"><rect x="0.7" y="0.7" width="14.6" height="14.6" fill="#fff" stroke="#333" stroke-width="1.3"/><rect x="1" y="1" width="14" height="3" fill="#555"/><rect x="3" y="6" width="3.5" height="3" fill="none" stroke="#333"/><circle cx="4.7" cy="12" r="1.7" fill="#666"/><path d="M8.5 6.5h5M8.5 8.5h4M8.5 11.5h5M8.5 13.3h4" stroke="#555" stroke-width="1"/></svg>
<span class="t" style="left:99.40px;top:955.00px;font-size:12px;line-height:16px;color:#111;transform:scaleX(0.8917);transform-origin:0 0;">Schedule: CUADRO SUPERFICIES (m2)</span>
<div style="position:absolute;left:65px;top:964.5px;width:11px;height:1px;border-top:1px dotted #9c9c9c;"></div>
<svg style="left:77px;top:956.5px" width="16" height="14"><rect x="0.7" y="0.7" width="14.6" height="12.2" fill="#fff" stroke="#333" stroke-width="1.3"/><rect x="1" y="1" width="14" height="3" fill="#555"/><path d="M1 7h14M1 10h14M5.5 4v9M10.5 4v9" stroke="#666" stroke-width="1"/></svg>
<span class="t" style="left:99.40px;top:973.00px;font-size:12px;line-height:16px;color:#111;transform:scaleX(0.8823);transform-origin:0 0;">Schedule: SUPERFICIES CONSTRUIDAS</span>
<div style="position:absolute;left:65px;top:982.5px;width:11px;height:1px;border-top:1px dotted #9c9c9c;"></div>
<svg style="left:77px;top:974.5px" width="16" height="14"><rect x="0.7" y="0.7" width="14.6" height="12.2" fill="#fff" stroke="#333" stroke-width="1.3"/><rect x="1" y="1" width="14" height="3" fill="#555"/><path d="M1 7h14M1 10h14M5.5 4v9M10.5 4v9" stroke="#666" stroke-width="1"/></svg>
<div style="position:absolute;left:5px;top:627px;width:1px;height:228px;border-left:1px dotted #9c9c9c;"></div>
<div style="position:absolute;left:25.5px;top:630px;width:1px;height:135px;border-left:1px dotted #9c9c9c;"></div>
<div style="position:absolute;left:45px;top:770px;width:1px;height:31px;border-left:1px dotted #9c9c9c;"></div>
<div style="position:absolute;left:5px;top:862px;width:1px;height:115px;border-left:1px dotted #9c9c9c;"></div>
<div style="position:absolute;left:25.5px;top:877px;width:1px;height:100px;border-left:1px dotted #9c9c9c;"></div>
<div style="position:absolute;left:45.5px;top:895px;width:1px;height:82px;border-left:1px dotted #9c9c9c;"></div>
<div style="position:absolute;left:65px;top:900px;width:1px;height:77px;border-left:1px dotted #9c9c9c;"></div>
<svg style="left:479px;top:163px" width="1380" height="814" viewBox="479 163 1380 814">
<rect x="479" y="163" width="1380" height="814" fill="#fff"/>
<path d="M995 649H1018V610H1639V643H1698V977H995Z" fill="#928a80"/>
<path d="M1731 643H1784V588.7H1859V792H1731Z" fill="#928a80"/>
<rect x="1704" y="824" width="13.5" height="153" fill="#928a80"/>
<path d="M953.2 163V572M984 163V572" stroke="#000" stroke-width="2" fill="none"/>
<rect x="480" y="618" width="441" height="27" fill="#fff"/>
<path d="M480 646.3H922" stroke="#000" stroke-width="2.2" fill="none"/>
<g fill="#000">
<rect x="931" y="644.4" width="87" height="5"/>
<rect x="1013" y="581" width="5" height="68.4"/>
<rect x="1013" y="605" width="631" height="5"/>
<rect x="955.3" y="649" width="4.7" height="328"/>
<rect x="974" y="649" width="5" height="328"/>
<rect x="989.3" y="649" width="5.7" height="328"/>
<rect x="1639" y="581" width="5" height="62"/>
<rect x="1779.3" y="581" width="5" height="62"/>
<rect x="1779.3" y="581" width="8" height="8"/>
<rect x="1639" y="638" width="145.3" height="5"/>
<rect x="1784" y="582.4" width="75" height="1.4"/>
<rect x="1784" y="585.6" width="75" height="2.4"/>
<rect x="1698" y="643" width="5.8" height="334"/>
<rect x="1726.4" y="643" width="4.8" height="154"/>
<rect x="1726.4" y="792" width="132.6" height="5"/>
<rect x="1727" y="819.4" width="132" height="4.7"/>
<path d="M1697.3 805H1703.8V809.2H1724Q1727.8 809.2 1727.8 813V820.5Q1730.8 821.5 1730.8 825.5Q1730.8 829.8 1727 829.8Q1723 829.8 1723 826V824H1697.3Z M1704 814.4V819.8H1723V814.4Z" fill-rule="evenodd"/>
</g>
<rect x="1644" y="581" width="135.3" height="57" fill="#fff"/>
<rect x="1703.8" y="643" width="22.6" height="166.5" fill="#fff"/>
<rect x="1036" y="624" width="153.5" height="61" fill="none" stroke="#000" stroke-width="3"/>
<path d="M1718 826V977M1728 824V977" stroke="#000" stroke-width="1.8" fill="none"/>
<path d="M1729 871.9H1859M1855.6 824V977" stroke="#6e6e6e" stroke-width="1.9" fill="none"/>
<path d="M1729 835.6H1734V846.5H1729M1729 846.5H1734V857.5H1729" stroke="#000" stroke-width="1" fill="#fff"/>
<path d="M1717 837.5H1708Q1705.3 837.5 1705.3 840V871M1717 840.2H1709.5Q1707.8 840.2 1707.8 842V871H1704" stroke="#000" stroke-width="1" fill="none"/>
<path d="M1718 826.3A171 171 0 0 0 1548.3 977" stroke="#000" stroke-width="1.8" fill="none"/>
<path d="M1704 826.5H1718" stroke="#000" stroke-width="1.2"/>
<path d="M966 890H1063.7M1161 890H1174.5M1271 890H1405M1502.5 890H1515.5M1612.5 890H1746.5M1844 890H1857" stroke="#000" stroke-width="3.4" stroke-linecap="round" fill="none"/>
<g stroke="#000" stroke-width="1.6" fill="none">
<path d="M948.5 637.5L952 639.5L959.5 636M951.5 639.5L954.5 641.5"/>
<path d="M998 624L1001.5 627L1008 628.5L1012.5 634M1012.5 634L1010.5 640.5"/>
<path d="M1012 607.5L1014 604.5"/>
<path d="M1644 622H1649.5M1657.5 622L1664 617.5M1694.5 615H1702.5M1767 606.5L1771.5 603M1774 604H1779"/>
<path d="M1728 627.5L1738 614.5L1740.5 628.5ZM1740.5 628.5L1744 633L1750.5 631L1748.5 637.5M1744 633L1735 637.5"/>
</g>
<g>
<path d="M858.75 496.9H871.25M883.75 496.9H896.25M908.75 496.9H921.25M933.75 496.9H946.25" stroke="#000" stroke-width="2.2" fill="none"/>
<path d="M985.00 496.9H996.25M1008.75 496.9H1021.25M1033.75 496.9H1046.25M1058.75 496.9H1071.25M1083.75 496.9H1096.25M1108.75 496.9H1121.25M1133.75 496.9H1146.25M1158.75 496.9H1171.25" stroke="#000" stroke-width="2.2" fill="none"/>
<path d="M854.6 496.9H871.2M1158.7 496.9H1175.2" stroke="#000" stroke-width="2.2"/>
<path d="M1174 495.70V513.90M1174 526.25V544.45" stroke="#000" stroke-width="2.2" fill="none"/>
<path d="M1172.80 543.6H1185.90M1197.70 543.6H1210.90M1222.70 543.6H1235.90M1247.70 543.6H1260.90M1272.70 543.6H1285.90M1297.70 543.6H1310.90M1322.70 543.6H1335.90M1347.70 543.6H1360.90M1372.70 543.6H1385.90M1397.70 543.6H1410.90M1422.70 543.6H1435.90M1447.70 543.6H1460.90M1472.70 543.6H1485.90M1497.70 543.6H1510.90M1522.70 543.6H1535.90M1547.70 543.6H1560.90M1572.70 543.6H1585.90M1597.70 543.6H1610.90M1622.70 543.6H1635.90M1647.70 543.6H1660.90M1672.70 543.6H1685.90M1697.70 543.6H1710.90M1722.70 543.6H1735.90M1747.70 543.6H1760.90M1772.70 543.6H1785.90M1797.70 543.6H1810.90" stroke="#000" stroke-width="2.2" fill="none"/>
<path d="M1809.8 438.50V448.70M1809.8 460.00V473.70M1809.8 485.00V498.70M1809.8 510.00V523.70M1809.8 535.00V544.80" stroke="#000" stroke-width="2.2" fill="none"/>
<path d="M1808.60 439.7H1819.00M1830.50 439.7H1844.00M1855.50 439.7H1859.00" stroke="#000" stroke-width="2.2" fill="none"/>
<path d="M855.8 496.25V508.75M855.8 521.25V533.75M855.8 546.25V558.75M855.8 571.25V583.75M855.8 596.25V608.75" stroke="#000" stroke-width="2.2" fill="none"/>
<path d="M855.8 647.40V658.75M855.8 671.25V683.75M855.8 696.25V708.75M855.8 721.25V733.75M855.8 746.25V758.75M855.8 771.25V783.75" stroke="#000" stroke-width="2.2" fill="none"/>
</g>
<path d="M1865 576H926V985" stroke="#ff00ff" stroke-width="10" stroke-linejoin="round" fill="none"/>
<path d="M470 617H1258V653H1865" stroke="#ff00ff" stroke-width="10" stroke-linejoin="round" fill="none"/>
<rect x="1013" y="604" width="5" height="45.4" fill="#17388a"/>
<rect x="1013" y="612" width="5" height="10" fill="#6a4fe6"/>
<path d="M1015.5 585V649" stroke="#cfe0ee" stroke-width="0.9" stroke-dasharray="6 4" fill="none"/>
<path d="M1015.5 348V581" stroke="#79b6cf" stroke-width="1.1" stroke-dasharray="6.5 5" fill="none"/>
<path d="M1008 332L1023 347M1023 332L1008 347" stroke="#b27ab8" stroke-width="1.1" fill="none"/>
<path d="M1053 338.9H1241.5M1205 497H1241.5M1237.7 338.9V497" stroke="#7b9fd6" stroke-width="1.3" fill="none"/>
<path d="M1234 335L1241.5 342.5M1234 493.3L1241.5 500.8" stroke="#7b9fd6" stroke-width="1.3" fill="none"/>
<path d="M841.8 766.6L716.8 890H966.5Z" fill="#fff" stroke="#000" stroke-width="2" stroke-linejoin="miter"/>
<circle cx="841.4" cy="890.2" r="82.3" fill="#fff" stroke="#000" stroke-width="2"/>
<path d="M855.8 821V834" stroke="#000" stroke-width="2.2"/>
<path d="M860 906.6H899V966" stroke="#000" stroke-width="1.7" stroke-dasharray="10.5 6.5 12.5 9.5 10 10 14 10 16 100" fill="none"/>
<text x="812.3" y="917" font-size="84.5" fill="#000" stroke="#000" stroke-width="0.9">2</text>
<rect x="1845.5" y="176.5" width="11" height="4" fill="#fff" stroke="#444" stroke-width="1"/>
</svg>
<div style="position:absolute;left:1218px;top:397.3px;width:16px;height:37.2px;overflow:hidden;"><span class="t" style="left:-12px;top:12px;width:40px;height:15px;font-size:15px;line-height:15px;font-weight:bold;color:#7f95d6;transform:rotate(-90deg) scaleX(0.9);transform-origin:50% 50%;letter-spacing:-0.2px;text-align:left;">0.7600</span></div>
<div style="position:absolute;left:478px;top:161px;width:1381px;height:1.9px;background:#747474;"></div>
<div style="position:absolute;left:478.1px;top:161px;width:1.9px;height:816px;background:#747474;"></div>
<svg style="left:0px;top:0px" width="1859" height="134">
<defs>
<linearGradient id="gg" x1="0" y1="0" x2="0" y2="1"><stop offset="0" stop-color="#f6f6f6"/><stop offset="1" stop-color="#d4d6d8"/></linearGradient>
<linearGradient id="gb" x1="0" y1="0" x2="0" y2="1"><stop offset="0" stop-color="#2d5ea8"/><stop offset="1" stop-color="#4f86cc"/></linearGradient>
<linearGradient id="gd" x1="0" y1="0" x2="1" y2="1"><stop offset="0" stop-color="#ededed"/><stop offset="1" stop-color="#d9d9d9"/></linearGradient>
</defs>
<path d="M4.5 7.5L10.5 0H14L19.5 4.5L18 10.5L12 12.5L20.5 21.5L16.5 24L9.5 16L8.5 24H2Z" fill="#1f57cf"/>
<path d="M10.5 0H14L19.5 4.5L18 10.5L12 12.5L10 8Z" fill="#2f72ea"/>
<path d="M4.5 7.5L10 8L9.5 16L8.5 24H2Z" fill="#1746b4"/>
<path d="M12 12.5L20.5 21.5L16.5 24L9.5 16Z" fill="#1a4fc4"/>
<path d="M26 13.2h6.6l-3.3 4z" fill="#222"/>
<path d="M45.5 10.5V1.5H50.5L52 3H58V5" fill="#e9e9e9" stroke="#3c3c3c" stroke-width="1.2"/><path d="M45.5 10.8L49 5H61.3L57.5 10.8Z" fill="#f2f2f2" stroke="#3c3c3c" stroke-width="1.2"/>
<path d="M70.5 0V10.2Q70.5 11.5 71.8 11.5H82.2Q83.5 11.5 83.5 10.2V0Z" fill="#5c5f64" stroke="#33363a" stroke-width="1"/><rect x="73" y="0" width="8" height="4.3" fill="#e6e6e6"/><rect x="73.3" y="7" width="7.2" height="4.5" fill="#d9d9d9"/><rect x="74.6" y="8" width="2" height="2.6" fill="#4a4a4a"/>
<path d="M93.5 3L97 1H104L107.5 3V9L104 11.5H97L93.5 9Z" fill="#f1f1f1" stroke="#3c3c3c" stroke-width="1.1"/><path d="M97 1V5.5L93.5 3M97 5.5H104V11.5M104 5.5L107.5 3M100.5 1V5.5" fill="none" stroke="#555" stroke-width="0.9"/><path d="M104.5 5L101.5 9.5H104L102.8 13.5L108 8.5H105.3L107 5Z" fill="#f0a020" stroke="#c87808" stroke-width="0.6"/>
<path d="M116 6.2h5l-2.5 3z" fill="#3a3a3a"/>
<path d="M129.3 5L135.5 0.5V3.2H139Q143.8 3.2 143.8 8V11.3H140.3V8.4Q140.3 6.7 138.6 6.7H135.5V9.6Z" fill="#fafafa" stroke="#3c3c3c" stroke-width="1.1" stroke-linejoin="round"/>
<path d="M152 6.2h5l-2.5 3z" fill="#3a3a3a"/>
<path d="M179.3 5L173.1 0.5V3.2H169.6Q164.8 3.2 164.8 8V11.3H168.3V8.4Q168.3 6.7 170 6.7H173.1V9.6Z" fill="#f2f2f2" stroke="#aaaaaa" stroke-width="1.1" stroke-linejoin="round"/>
<path d="M188 6.2h5l-2.5 3z" fill="#3a3a3a"/>
<path d="M200.5 1V16" stroke="#bdbdbd"/><path d="M201.5 1V16" stroke="#fafafa"/>
<path d="M209 3.3H222" stroke="#222" stroke-width="1.3"/><path d="M208 3.3L211.5 1V5.6ZM223 3.3L219.5 1V5.6Z" fill="#222"/><rect x="208.3" y="7.5" width="14.5" height="3.4" rx="0.8" fill="#f2c12e" stroke="#b98b12" stroke-width="0.8"/><path d="M210 8v1.3M212 8v1.3M214 8v1.3M216 8v1.3M218 8v1.3M220 8v1.3" stroke="#a07808" stroke-width="0.7"/>
<path d="M231 6.5h5l-2.5 3z" fill="#3a3a3a"/>
<path d="M246.5 11L257.5 1.5" stroke="#222" stroke-width="1.3"/><path d="M244.5 9L249.5 14M255 -1.5L260 3.5" stroke="#222" stroke-width="1.1"/><path d="M246 11.5L247.5 7.5L250.3 10.5ZM258 1L254 2.3L256.7 5.2Z" fill="#222"/>
<path d="M274.5 3L277.5 0.8H280.5L282.8 3.5L280.8 7H277.3Z" fill="#fff" stroke="#333" stroke-width="1.1"/><path d="M274.8 4.5H271V9.5" fill="none" stroke="#333" stroke-width="1.1"/><rect x="269.7" y="9.5" width="2.6" height="2.6" fill="#fff" stroke="#333" stroke-width="0.9"/><text x="277.2" y="6.3" font-size="6" fill="#222">1</text>
<text x="291.7" y="12" font-size="17.5" font-weight="bold" fill="#3d3d3d" textLength="15" lengthAdjust="spacingAndGlyphs">A</text>
<path d="M323.5 6L328 1.2L333 0.8L337.3 5.5V10.3L332 12.3H326.5L324.7 11V6.6Z" fill="#f4f4f4" stroke="#3c3c3c" stroke-width="1.1" stroke-linejoin="round"/><path d="M328 1.2L332.3 6V12M332.3 6L337.3 5.5M324.7 6.6L332.3 6" fill="none" stroke="#555" stroke-width="0.9"/><rect x="327" y="8" width="2.2" height="3.3" fill="#d0d0d0" stroke="#666" stroke-width="0.5"/>
<path d="M346.5 6.2h5l-2.5 3z" fill="#3a3a3a"/>
<circle cx="365.5" cy="6" r="4.3" fill="#fafafa" stroke="#222" stroke-width="1.3"/><path d="M367.5 0.8L373.2 6L367.5 11.2Z" fill="#222"/><path d="M365.5 10.3V13.5" stroke="#222" stroke-width="1.2"/>
<rect x="384" y="0" width="6.5" height="2.6" fill="#222"/><rect x="384" y="5.3" width="5" height="1.6" fill="#222"/><rect x="383.5" y="10.8" width="4" height="2.2" fill="#222"/><path d="M393.5 0.6H399M392.5 5.8H399M391 11.8H399" stroke="#222" stroke-width="1.1"/><path d="M395.5 -1L389 14" stroke="#3b8fdc" stroke-width="1.3"/>
<path d="M406.5 1V16" stroke="#bdbdbd"/><path d="M407.5 1V16" stroke="#fafafa"/>
<rect x="417.5" y="0.2" width="9.5" height="6" fill="#f2f2f2" stroke="#8a8a8a"/><rect x="414.5" y="3.5" width="9.5" height="7" fill="#fafafa" stroke="#777"/><path d="M424.3 8.2L429.2 13.4M429.2 8.2L424.3 13.4" stroke="#d8242a" stroke-width="2"/>
<rect x="441.5" y="0.5" width="9" height="6.5" fill="#f6f6f6" stroke="#333" stroke-width="1.1"/><rect x="444.5" y="6" width="9.3" height="6.8" fill="#f2f2f2" stroke="#333" stroke-width="1.1"/><rect x="444.5" y="6" width="9.3" height="1.8" fill="#555"/><path d="M439.5 8V12H442M452 0.8L453.8 3.5" fill="none" stroke="#222" stroke-width="1.1"/>
<path d="M458.5 6.2h5l-2.5 3z" fill="#3a3a3a"/>
<path d="M472.5 3.2H481" stroke="#333" stroke-width="1.5"/>
<path d="M472.8 6h8l-4.0 4.2z" fill="#333"/>
<path d="M1340.5 3L1344.3 7L1340.5 11Z" fill="#333"/>
<path d="M1534.3 12.5V6L1536 1.5H1539L1540 6V12.5ZM1542 12.5V6L1543 1.5H1546L1547.7 6V12.5Z" fill="#fbfbfb" stroke="#2e2e2e" stroke-width="1.1"/><path d="M1540 5H1542" stroke="#2e2e2e" stroke-width="1.5"/><path d="M1534.3 8.5H1540M1542 8.5H1547.7" stroke="#2e2e2e" stroke-width="0.9"/>
<path d="M1560.2 2.4Q1558.2 8.4 1562.2 10.2Q1566.4 11.6 1570 7.8Z" fill="#fafafa" stroke="#2e2e2e" stroke-width="1.1" stroke-linejoin="round"/><path d="M1565 5.2L1569.6 0.4M1563.2 10.6L1560.4 13.4H1568.6L1565.8 11" fill="none" stroke="#2e2e2e" stroke-width="1.1"/>
<path d="M1588.3 0.8L1590.2 5.2L1595.2 5.6L1591.4 8.8L1592.6 13.5L1588.3 11L1584 13.5L1585.2 8.8L1581.4 5.6L1586.4 5.2Z" fill="#fbfbfb" stroke="#2e2e2e" stroke-width="1.1" stroke-linejoin="round"/>
<path d="M1605.5 13Q1606 9.5 1610 8.6Q1608.7 7 1608.7 4.5Q1608.7 0.8 1612.8 0.8Q1616.9 0.8 1616.9 4.5Q1616.9 7 1615.6 8.6Q1619.8 9.5 1620.3 13Z" fill="#fbfbfb" stroke="#2e2e2e" stroke-width="1.1"/>
<path d="M1711.3 5.8h5l-2.5 3z" fill="#3a3a3a"/>
<text x="1725.6" y="12.9" font-size="15.5" font-weight="bold" fill="#2a4f9e" stroke="#2a4f9e" stroke-width="0.5" textLength="15" lengthAdjust="spacingAndGlyphs">X</text><path d="M1725 9.2Q1733 7.4 1741 2.4" stroke="#f0f0f0" stroke-width="0.9" fill="none"/>
<path d="M1750.5 1V15" stroke="#b5b5b5"/><path d="M1751.5 1V15" stroke="#f5f5f5"/>
<circle cx="1767.7" cy="6.8" r="7.5" fill="#fbfbfb" stroke="#222" stroke-width="1.3"/><text x="1763.7" y="11.6" font-size="13.5" font-weight="bold" fill="#27468f" stroke="#27468f" stroke-width="0.4">?</text>
<path d="M1782.8 6.5h5l-2.5 3z" fill="#3a3a3a"/>
<path d="M19.3 50.3V66.3L23 62.8L25.8 69.2L28.2 68L25.4 61.8H30.6Z" fill="#fff" stroke="#2e2e2e" stroke-width="1.2" stroke-linejoin="round"/>
<path d="M39.5 122.3h7.6l-3.8 3.9z" fill="#3a3a3a"/>
<g stroke="#d2d2d2" stroke-width="1" fill="#f1f1f1"><path d="M70.5 48L73.5 45.5H82L80 48ZM70.5 48H80V57H70.5ZM80 48L82 45.5V54.5L80 57Z"/><path d="M83.5 48L86.5 45.5H95.5L93.5 48ZM83.5 48H93.5V57H83.5ZM93.5 48L95.5 45.5V54.5L93.5 57Z"/><path d="M70.5 61L73.5 58.5H82L80 61ZM70.5 61H80V70H70.5ZM80 61L82 58.5V67.5L80 70Z"/><rect x="86.8" y="56.6" width="12" height="17" fill="#f7f7f7" stroke="#c4c4c4"/><rect x="88.8" y="58.8" width="5" height="5" fill="#d9d9d9" stroke="none"/><rect x="95" y="58.8" width="1.6" height="5" fill="#dcdcdc" stroke="none"/><path d="M89 67H96.5M89 70.5H96.5M91 65.8V68.2M94.8 69.3V71.7" stroke="#cfcfcf"/></g>
<rect x="73.4" y="80.4" width="20" height="29.2" fill="#fdfdfd" stroke="#2f3338" stroke-width="1.3"/><rect x="73.4" y="80" width="20" height="1.8" fill="#2f3338"/><rect x="76.2" y="83.5" width="10.8" height="9.8" fill="url(#gb)" stroke="#23385c" stroke-width="0.9"/><rect x="88.5" y="83.3" width="2.5" height="10.2" fill="#b5b8bc"/><path d="M77 98.2H90M77 104.5H90" stroke="#333" stroke-width="1.2"/><path d="M80 96.3V100.1M87 102.6V106.4" stroke="#333" stroke-width="1.8"/>
<g stroke="#cfcfcf" stroke-width="1"><rect x="132.5" y="48" width="21" height="23.5" rx="1.5" fill="#e6e6e6"/><path d="M138 48.5V46.8H140.5Q143 44.2 145.5 46.8H148V48.5Z" fill="#ececec"/><path d="M139.8 53.8H150.5L156.2 59.3V74H139.8Z" fill="#f6f6f6"/><path d="M150.5 53.8V59.3H156.2" fill="none"/></g>
<path d="M142.4 98.2h4.8l-2.4 2.6z" fill="#9a9a9a"/>
<g stroke="#c6c6c6" fill="none" stroke-width="1.3"><path d="M176.5 46.8L186 57M188 46.8L178.5 57"/><circle cx="177.6" cy="58.6" r="1.9"/><circle cx="186.9" cy="58.6" r="1.9"/></g>
<g stroke="#d0d0d0" fill="#f4f4f4" stroke-width="1"><path d="M174.8 70.8H182V82.5H174.8Z"/><path d="M178.6 73.5H185.5L189.3 77.2V85.3H178.6Z"/><path d="M185.5 73.5V77.2H189.3" fill="none"/></g>
<rect x="174.8" y="94.6" width="6.8" height="8.6" fill="#fbfbfb" stroke="#2e3238" stroke-width="1.1"/><rect x="176.3" y="96" width="3.6" height="1.6" fill="#2d5ea8"/><path d="M176.3 100H180M179 99L180.2 100L179 101" stroke="#3a6cb4" stroke-width="0.8" fill="none"/><path d="M189.6 95.6L183.2 102.4" stroke="#5a5a50" stroke-width="2.1"/><path d="M189.6 95.6L187.8 97.6" stroke="#c8a040" stroke-width="2.1"/><path d="M183.8 101.3L185.7 103.1Q182 108.6 174.8 109.4Q179.8 106.8 181.3 103.6Z" fill="#4d5258"/>
<path d="M204.3 46.6H210.3V48.2H208.3V58.6H210.3V60.2H204.3V58.6H206.3V48.2H204.3Z" fill="#d8d8d8" stroke="#222" stroke-width="1"/><path d="M209.3 53.5H215" stroke="#111" stroke-width="1.2"/><path d="M208.6 53.5L211.8 51.2V55.8Z" fill="#111"/><path d="M219.8 46.8H216.8V49.8L214.3 51V56L216.8 57.2V60.2H219.8" fill="#ececec" stroke="#222" stroke-width="1"/>
<path d="M261.4 53h4.8l-2.4 2.8z" fill="#3a3a3a"/>
<rect x="210.2" y="70.8" width="9.5" height="9.7" fill="#9fcdee" stroke="#2b6fad" stroke-width="1.1"/><circle cx="209.7" cy="80.3" r="5" fill="#fdfdfd" stroke="#2a2a2a" stroke-width="1.1"/><path d="M210.4 75.35A5 5 0 0 1 214.7 80.3" fill="none" stroke="#d02a2a" stroke-width="1.3"/>
<path d="M252.4 77h4.8l-2.4 2.8z" fill="#3a3a3a"/>
<rect x="210.2" y="94.6" width="9.5" height="9.7" fill="#a7d1ef" stroke="#2b6fad" stroke-width="1.1"/><circle cx="209.7" cy="104.4" r="5.1" fill="#a7d1ef" fill-opacity="0.9" stroke="#2b6fad" stroke-width="1.1"/>
<path d="M254.2 101h4.8l-2.4 2.8z" fill="#3a3a3a"/>
<g stroke="#d4d4d4" fill="#ededed" stroke-width="1"><path d="M275.5 46.8H282.5V51H290.8V57H282.5V61H275.5Z"/><path d="M279.5 54L283 50.8V52.8H288V55.2H283V57.2Z" fill="#f8f8f8"/></g>
<path d="M301.2 47L305 46.5L311 49.5L314.7 48.2V58.5L311.5 61.5L301.2 57Z" fill="#e9edf2" stroke="#2a3a50" stroke-width="1"/><path d="M301.2 47L311 51V61.3" fill="none" stroke="#2a3a50" stroke-width="0.9"/><path d="M301.8 48L310.4 51.5V60.3L301.8 56.6Z" fill="#3c86d6"/><path d="M303.6 51.8L308.6 53.8V57.6L303.6 55.6Z" fill="#9ccaf0" stroke="#1d4f8c" stroke-width="0.8"/>
<path d="M276.3 70.8V74.5M275 73.2L276.3 74.8L277.6 73.2" stroke="#2b78c8" stroke-width="1" fill="none"/><path d="M279.5 71V74.2H283.8V71M281.6 71.8V74" stroke="#222" stroke-width="1" fill="none"/><path d="M279 77.2H291M279 81.6H291" stroke="#2a2a2a" stroke-width="1.2"/><path d="M279.5 79.4H291" stroke="#2a2a2a" stroke-width="0.9" stroke-dasharray="2.2 1.3"/><path d="M279.5 84.3H285.5M284 83L285.8 84.3L284 85.6" stroke="#2b78c8" stroke-width="1" fill="none"/>
<circle cx="304" cy="74" r="3.5" fill="#fff" stroke="#222" stroke-width="1.1"/><path d="M301.6 71.6L306.4 76.4M306.4 71.6L301.6 76.4" stroke="#222" stroke-width="1"/><path d="M307.8 79L309.8 77.2H315.6V83.3L313.8 85H307.8Z" fill="#e3e3e3" stroke="#222" stroke-width="1"/><path d="M300.5 79V82.7H304.5" fill="none" stroke="#111" stroke-width="1.2"/><path d="M303.5 80.8L306 82.7L303.5 84.6Z" fill="#111"/>
<path d="M323.4 77h4.8l-2.4 2.8z" fill="#3a3a3a"/>
<path d="M276 94.5V109.2H291M278.6 94.5V106.6H291" stroke="#2f7fd0" stroke-width="1.2" fill="none"/><path d="M280.8 94.5V104.4H285" stroke="#2f7fd0" stroke-width="1" fill="none"/><path d="M276.8 94.4H280" stroke="#555" stroke-width="1"/><path d="M286.5 104.3H291M286.5 106.7H291" stroke="#2f7fd0" stroke-width="1.1"/><path d="M283 102.8L283.6 99.8L289.6 94.4L291.5 96.4L285.6 102Z" fill="#f1c232" stroke="#8a6a10" stroke-width="0.7"/><path d="M283 102.8L283.5 100.6L285 102.2Z" fill="#333"/>
<path d="M307 101L314.8 108.6" stroke="#c98d8d" stroke-width="2.4" stroke-linecap="round"/><path d="M307 101L314.8 108.6" stroke="#7a4a4a" stroke-width="0.5" transform="translate(0.9,-0.9)"/><path d="M300.3 100.2L305 94.6Q306.8 93.6 308.6 95.4L310 97.5L305.2 103.2L303.6 102Z" fill="#59616a" stroke="#2f353b" stroke-width="0.9"/>
<path d="M343.6 44V75" stroke="#1c1c1c" stroke-width="1.3"/><rect x="345.6" y="47.6" width="10.8" height="9.8" fill="#a9d2ef" stroke="#3a7cba" stroke-width="1.1"/><rect x="345.6" y="60.6" width="25.8" height="11.8" rx="0.8" fill="url(#gg)" stroke="#3a3a3a" stroke-width="1.1"/>
<path d="M411.8 58.8H402.2V54.2A6.8 6.8 0 0 0 388.6 54.2V58.8H387.8A5.7 5.7 0 0 0 387.8 70.2H411.8" fill="none" stroke="#3d83c2" stroke-width="1.2"/><path d="M411.8 59.8H401.2V54.2A5.8 5.8 0 0 0 389.6 54.2V59.8H387.8A4.7 4.7 0 0 0 387.8 69.2H411.8" fill="none" stroke="#cbe4f6" stroke-width="1.4"/><path d="M411.8 61.4H399.2V54.4A3.8 3.8 0 0 0 391.6 54.4V61.4H388A3.1 3.1 0 0 0 388 67.6H411.8" fill="none" stroke="#34383e" stroke-width="1.2"/>
<path d="M422.6 48H426.0L431.6 53.6V63H427.8V71.4H422.6Z" fill="url(#gg)" stroke="#3a3a3a" stroke-width="1.1" stroke-linejoin="round"/>
<path d="M448.4 48H445L439.4 53.6V71.4H448.4Z" fill="#d2e6f5" stroke="#b4d3ea" stroke-width="1"/>
<path d="M435.6 44V73.6" stroke="#3f9b3f" stroke-width="1.9"/>
<path d="M435.4 57.4V70.4L438.3 67.6L440.6 72.8L442.7 71.8L440.4 66.8H444.3Z" fill="#fff" stroke="#2e2e2e" stroke-width="1" stroke-linejoin="round"/>
<path d="M461.4 48H464.79999999999995L470.4 53.6V63H466.59999999999997V71.4H461.4Z" fill="url(#gg)" stroke="#3a3a3a" stroke-width="1.1" stroke-linejoin="round"/>
<path d="M487.6 48H484.2L478.6 53.6V71.4H487.6Z" fill="#d2e6f5" stroke="#b4d3ea" stroke-width="1"/>
<path d="M474.5 44V73" stroke="#3d83c8" stroke-width="1.7"/>
<path d="M474.3 73.6L475.4 69.4L485.6 60L488.9 63.4L478.6 72.6Z" fill="#f3c63a" stroke="#7a5a10" stroke-width="0.7"/><path d="M485.6 60L486.9 58.8Q488 58.2 489 59.2L490 60.4Q490.6 61.4 489.9 62.3L488.9 63.4Z" fill="#a5672e"/><path d="M474.3 73.6L475.4 69.4L478.6 72.6Z" fill="#f4e6c8" stroke="#7a5a10" stroke-width="0.5"/><path d="M474.3 73.6L474.9 71.5L476.4 73Z" fill="#222"/>
<path d="M358.1 80L363.6 86.3H360.3V92.5H355.9V86.3H352.6ZM358.1 109.8L352.6 103.5H355.9V97.5H360.3V103.5H363.6ZM343.7 95L350 89.5V92.8H355.6V97.2H350V100.5ZM372.6 95L366.3 89.5V92.8H360.6V97.2H366.3V100.5Z" fill="#3a3e46"/><rect x="355.7" y="92.6" width="4.8" height="4.8" fill="#fff" stroke="#3a3e46" stroke-width="1"/>
<circle cx="389" cy="86.9" r="5.7" fill="url(#gd)" stroke="#3a3a3a" stroke-width="1.1"/><path d="M397.4 84.4H402.5Q406.4 84.4 406.4 88.5V90" fill="none" stroke="#1c1c1c" stroke-width="1.3"/><path d="M403.6 89.2H409.2L406.4 92.6Z" fill="#1c1c1c"/><circle cx="404.3" cy="103.3" r="5.3" fill="#c5e0f4" stroke="#3d8ccc" stroke-width="1.1"/><circle cx="400.1" cy="100.6" r="5.6" fill="#b5d7f0" stroke="#3d8ccc" stroke-width="1.1"/>
<path d="M444.3 88.7A12 12 0 1 1 431.5 86" fill="none" stroke="#3a3e46" stroke-width="2.3"/><path d="M431 81.6L441.5 85.6L431 90.4Z" fill="#3a3e46"/>
<path d="M467.2 83.5H479" stroke="#222" stroke-width="1.2"/><path d="M477.8 81.3L481 83.5L477.8 85.7Z" fill="#222"/><path d="M460.4 87.4H473M460.4 90.4H473" stroke="#33373c" stroke-width="1.1"/><path d="M472.8 86.9H484.5V98.5H480.4V90.9H472.8Z" fill="#8cc6f2" stroke="#5aa5e0" stroke-width="0.7"/><path d="M480.9 98.5V109.8M484 98.5V109.8" stroke="#33373c" stroke-width="1.1"/><path d="M487.6 93V103.8" stroke="#222" stroke-width="1.2"/><path d="M485.4 94.2L487.6 91L489.8 94.2Z" fill="#222"/>
<rect x="501.4" y="52.6" width="14.2" height="4.2" rx="0.8" fill="#9ccbf0" stroke="#2b72b8" stroke-width="1.1"/><path d="M508.5 49V60" stroke="#c8302c" stroke-width="1" stroke-dasharray="1.6 1.1"/><path d="M507.3 49V60M509.7 49V60" stroke="#fff" stroke-width="0.6"/>
<rect x="526.4" y="52.6" width="4" height="4.2" fill="#9ccbf0" stroke="#2b72b8" stroke-width="1.1"/><rect x="536.6" y="52.6" width="4" height="4.2" fill="#9ccbf0" stroke="#2b72b8" stroke-width="1.1"/><path d="M533.5 49V60" stroke="#c8302c" stroke-width="1" stroke-dasharray="1.6 1.1"/>
<path d="M551.2 51.2H555.4000000000001" stroke="#222" stroke-width="1"/><path d="M555.4000000000001 47.800000000000004V54.6L557.6 53.2H561.8000000000001L563.8000000000001 54.6V47.2L561.8000000000001 49.0H557.6Z" fill="#fdfdfd" stroke="#222" stroke-width="1" stroke-linejoin="round"/><path d="M558.6 49.0V53.2M561.0 49.0V53.2" stroke="#222" stroke-width="0.9"/>
<path d="M560.6 54.6L566.6 60.4M566.6 54.6L560.6 60.4" stroke="#d8242a" stroke-width="1.9"/>
<path d="M551.2 78.19999999999999H555.4000000000001" stroke="#222" stroke-width="1"/><path d="M555.4000000000001 74.8V81.6L557.6 80.19999999999999H561.8000000000001L563.8000000000001 81.6V74.19999999999999L561.8000000000001 76.0H557.6Z" fill="#fdfdfd" stroke="#222" stroke-width="1" stroke-linejoin="round"/><path d="M558.6 76.0V80.19999999999999M561.0 76.0V80.19999999999999" stroke="#222" stroke-width="0.9"/>
<rect x="501.6" y="71" width="5.4" height="5" fill="#e6e6e6" stroke="#2f2f2f" stroke-width="1.1"/><rect x="511" y="71" width="5.4" height="5" fill="#9ccbf0" stroke="#2b72b8" stroke-width="1.1"/><rect x="501.6" y="80" width="5.4" height="5" fill="#9ccbf0" stroke="#2b72b8" stroke-width="1.1"/><rect x="511" y="80" width="5.4" height="5" fill="#9ccbf0" stroke="#2b72b8" stroke-width="1.1"/>
<rect x="526.5" y="71" width="14.8" height="14" fill="#aad2ef" stroke="#2b72b8" stroke-width="1.1"/><rect x="526.5" y="77.7" width="7.6" height="7.3" fill="url(#gg)" stroke="#2f2f2f" stroke-width="1.1"/>
<path d="M504.4 97.2H510.59999999999997" stroke="#222" stroke-width="1.1"/><path d="M509.8 95.2L512.6 97.2L509.8 99.2Z" fill="#222"/><path d="M501.2 102.9H507.7" stroke="#33373c" stroke-width="1"/><path d="M507.7 102.9H514.4" stroke="#5aa9e6" stroke-width="1"/><path d="M501.2 104.7H507.7" stroke="#33373c" stroke-width="1"/><path d="M507.7 104.7H514.4" stroke="#5aa9e6" stroke-width="1"/><path d="M514.8 94.6V109.3M516.8 94.6V109.3" stroke="#33373c" stroke-width="1"/>
<path d="M529.2 97.2H535.4" stroke="#222" stroke-width="1.1"/><path d="M534.6 95.2L537.4 97.2L534.6 99.2Z" fill="#222"/><path d="M526 100.5H532.5" stroke="#33373c" stroke-width="1"/><path d="M532.5 100.5H539.2" stroke="#5aa9e6" stroke-width="1"/><path d="M526 102.3H532.5" stroke="#33373c" stroke-width="1"/><path d="M532.5 102.3H539.2" stroke="#5aa9e6" stroke-width="1"/><path d="M526 105H532.5" stroke="#33373c" stroke-width="1"/><path d="M532.5 105H539.2" stroke="#5aa9e6" stroke-width="1"/><path d="M526 106.8H532.5" stroke="#33373c" stroke-width="1"/><path d="M532.5 106.8H539.2" stroke="#5aa9e6" stroke-width="1"/><path d="M539.6 94.6V109.3M541.6 94.6V109.3" stroke="#33373c" stroke-width="1"/>
<path d="M554.6 97.8L563.6 106.8M563.6 97.8L554.6 106.8" stroke="#c22a2a" stroke-width="4" stroke-linecap="round"/><path d="M554.6 97.8L563.6 106.8M563.6 97.8L554.6 106.8" stroke="#f26464" stroke-width="2.6" stroke-linecap="round"/>
<g stroke="#cdcdcd" fill="#f6f6f6" stroke-width="1.1"><path d="M585.6 67.6A5.2 5.2 0 1 1 591.4 67.6V70H585.6Z"/><rect x="586.4" y="70" width="4.2" height="3" rx="0.8"/></g>
<path d="M602.3 65h4.8l-2.4 2.8z" fill="#8e8e8e"/>
<g stroke="#cdcdcd" fill="#f1f1f1" stroke-width="1"><path d="M616.5 64.5L621 61.3H627.8L631.6 64V68.8L627.6 71.4H620L616.5 69Z"/><path d="M620 65.5H626.4V71.2H620Z" fill="#e9e9e9"/><path d="M620 65.5L622.5 63.3H628.5L626.4 65.5M628.5 63.3V69.2L626.4 71.2" fill="none"/><circle cx="628.6" cy="60.6" r="1.9" fill="#f8f8f8"/><path d="M628.6 57.4V58.4M628.6 62.8V63.8M625.4 60.6H626.4M630.8 60.6H631.8M626.3 58.3L627 59M630.2 62.2L630.9 62.9M630.9 58.3L630.2 59M627 62.2L626.3 62.9" /></g>
<path d="M596 84.2L588.6 91.6" stroke="#cfcfcf" stroke-width="2.2" stroke-linecap="round"/><path d="M589.6 90.2L591.2 91.8Q587.6 96.2 581.2 96.6Q585.8 94.4 587.4 91.6Z" fill="#c4c4c4"/>
<path d="M602.3 89.2h4.8l-2.4 2.8z" fill="#8e8e8e"/>
<path d="M616 84.4H632" stroke="#1c1c1c" stroke-width="1"/><path d="M616 87.9H632" stroke="#1c1c1c" stroke-width="2"/><path d="M616 91.6H632" stroke="#1c1c1c" stroke-width="1" stroke-dasharray="1.4 1"/><path d="M627.2 91.8H630V94.2H632.2L628.6 97.8L625 94.2H627.2Z" fill="#2b7bd0"/>
<path d="M649 54.6H672" stroke="#3a3e46" stroke-width="1.5"/><path d="M646 54.6L651.2 51V58.2ZM675 54.6L669.8 51V58.2Z" fill="#3a3e46"/><rect x="646.3" y="62.2" width="28.4" height="5.4" rx="1" fill="#f3c534" stroke="#b98c14" stroke-width="0.9"/><path d="M649 62.8v2.2M652 62.8v1.4M655 62.8v2.2M658 62.8v1.4M661 62.8v2.2M664 62.8v1.4M667 62.8v2.2M670 62.8v1.4M672.6 62.8v2.2" stroke="#9c7408" stroke-width="0.8"/>
<path d="M683 59h5.2l-2.6 3z" fill="#3a3a3a"/>
<path d="M652.4 102.6L669.4 86.4" stroke="#3a3e46" stroke-width="1.4"/><path d="M667.2 80.4L675.8 88.8M646 101.4L654.6 109.8" stroke="#3a3e46" stroke-width="1.2"/><path d="M650.6 104.4L652.2 98.4L656.4 102.8ZM671.2 84.6L665.2 86.2L669.6 90.4Z" fill="#3a3e46"/>
<path d="M683 95h5.2l-2.6 3z" fill="#3a3a3a"/>
<g stroke="#cccccc" fill="none" stroke-width="1.1"><path d="M706.6 45.8H702.6V74.2H706.6M727.4 45.8H731.4V74.2H727.4M744.4 45.8H740.4V74.2H744.4M764.6 56H768.6V74.2H764.6"/></g>
<g stroke="#cccccc" fill="#f0f0f0" stroke-width="1"><path d="M707 51.5L709.5 48.5H718L716 51.5ZM707 51.5H716V60.5H707ZM716 51.5L718 48.5V57.8L716 60.5"/><rect x="707" y="60.5" width="9" height="9.5"/><path d="M716 60.5L718.6 58.4H728L725.5 60.5ZM716 60.5H725.5V70H716ZM725.5 60.5L728 58.4V67.4L725.5 70Z"/></g>
<g stroke="#cccccc" fill="#f3f3f3" stroke-width="1"><circle cx="750.6" cy="55.8" r="6.4"/><path d="M751.6 59.6L754.2 56.8H763.4L761 59.6ZM751.6 59.6H761V69H751.6ZM761 59.6L763.4 56.8V66.4L761 69Z" fill="#efefef"/><circle cx="764.4" cy="50" r="2.6" fill="#f7f7f7"/><path d="M764.4 45.2V46.4M764.4 53.6V54.8M759.6 50H760.8M768 50H769.2M761 46.6L761.9 47.5M766.9 52.5L767.8 53.4M767.8 46.6L766.9 47.5M761.9 52.5L761 53.4"/></g>
<path d="M708.8 80.4L732.6 88V103.4L708.8 95.6Z" fill="#f2f4f6" stroke="#1e1e1e" stroke-width="1.1" stroke-linejoin="round"/><path d="M705.6 85.2L728.8 93V107.6L705.6 100Z" fill="#5cb0ee" stroke="#1d5e9c" stroke-width="1" stroke-linejoin="round"/><path d="M705.6 85.2L706.8 83.6L729.8 91.2L728.8 93" fill="#a5d6f8" stroke="#1d5e9c" stroke-width="0.8"/><path d="M701.4 89L725.6 97.2V111.2L701.4 103.4Z" fill="#e7eaee" stroke="#1e1e1e" stroke-width="1.2" stroke-linejoin="round"/><path d="M725.6 97.2L727.4 95.6V109.4L725.6 111.2" fill="#fff" stroke="#1e1e1e" stroke-width="1"/><path d="M701.4 89L702.8 87.8L727.4 95.6" fill="none" stroke="#1e1e1e" stroke-width="1"/>
<g stroke="#cccccc" fill="#f1f1f1" stroke-width="1"><rect x="739.6" y="80.6" width="7" height="6.6"/><rect x="761.6" y="80.6" width="7" height="6.6"/><rect x="739.6" y="102.6" width="10.8" height="6.6"/><path d="M762.2 98L767 102.6L762.2 107.2L757.4 102.6Z"/><path d="M749.2 83.8H757.6M743 90.4V98.4M749.6 90.8L755.4 96.6" fill="none" stroke="#c2c2c2" stroke-width="1.1"/><path d="M756.6 81.8L759.2 83.8L756.6 85.8ZM741 97.4L743 100L745 97.4ZM756 94.4L756.8 98L753.2 97.2Z" fill="#c2c2c2" stroke="none"/></g>
<path d="M787.4 62.6L800.6 49.4" stroke="#222" stroke-width="1.1"/><rect x="786.1" y="61.300000000000004" width="2.6" height="2.6" fill="#fff" stroke="#1c1c1c" stroke-width="0.9"/><rect x="799.3000000000001" y="48.1" width="2.6" height="2.6" fill="#fff" stroke="#1c1c1c" stroke-width="0.9"/>
<rect x="809.5" y="51.6" width="13.2" height="8.1" fill="url(#gg)" stroke="#222" stroke-width="1.1"/><rect x="808.2" y="58.400000000000006" width="2.6" height="2.6" fill="#fff" stroke="#1c1c1c" stroke-width="0.9"/><rect x="821.4000000000001" y="50.300000000000004" width="2.6" height="2.6" fill="#fff" stroke="#1c1c1c" stroke-width="0.9"/>
<path d="M838.2 48.8L845.4 54.1L842.7 62.5L833.7 62.5L831.0 54.1Z" fill="url(#gd)" stroke="#222" stroke-width="1"/><path d="M838.2 49.4V55.6" stroke="#222" stroke-width="1"/><rect x="836.9000000000001" y="48.1" width="2.6" height="2.6" fill="#fff" stroke="#1c1c1c" stroke-width="0.9"/><rect x="836.9000000000001" y="54.300000000000004" width="2.6" height="2.6" fill="#fff" stroke="#1c1c1c" stroke-width="0.9"/>
<path d="M860.3 48.8L867.5 54.1L864.8 62.5L855.8 62.5L853.1 54.1Z" fill="url(#gd)" stroke="#222" stroke-width="1"/><path d="M860.3 55.6L865.4 59.2" stroke="#222" stroke-width="1"/><path d="M867.6 55L864.2 63" stroke="#d02a2a" stroke-width="1" stroke-dasharray="1.6 1"/><rect x="859.1" y="54.300000000000004" width="2.6" height="2.6" fill="#fff" stroke="#1c1c1c" stroke-width="0.9"/><rect x="864.1" y="57.900000000000006" width="2.6" height="2.6" fill="#fff" stroke="#1c1c1c" stroke-width="0.9"/>
<circle cx="881.3" cy="55.8" r="7" fill="url(#gd)" stroke="#222" stroke-width="1"/><path d="M881.3 55.6L886.4 50.6" stroke="#222" stroke-width="1"/><rect x="880.0" y="54.300000000000004" width="2.6" height="2.6" fill="#fff" stroke="#1c1c1c" stroke-width="0.9"/><rect x="885.1" y="49.300000000000004" width="2.6" height="2.6" fill="#fff" stroke="#1c1c1c" stroke-width="0.9"/>
<path d="M787.4 84.4Q788.4 74 800.6 71.5" fill="none" stroke="#222" stroke-width="1.1" stroke-dasharray="2 1.2"/><rect x="786.1" y="83.10000000000001" width="2.6" height="2.6" fill="#fff" stroke="#1c1c1c" stroke-width="0.9"/><rect x="790.2" y="74.3" width="2.6" height="2.6" fill="#fff" stroke="#1c1c1c" stroke-width="0.9"/><rect x="799.3000000000001" y="70.2" width="2.6" height="2.6" fill="#fff" stroke="#1c1c1c" stroke-width="0.9"/>
<path d="M809.5 84.4Q811 73.6 822.7 71.5" fill="none" stroke="#222" stroke-width="1"/><path d="M820.4 83.6H822.8M821.6 82.4V84.8" stroke="#222" stroke-width="1"/><rect x="808.2" y="83.10000000000001" width="2.6" height="2.6" fill="#fff" stroke="#1c1c1c" stroke-width="0.9"/><rect x="821.4000000000001" y="70.2" width="2.6" height="2.6" fill="#fff" stroke="#1c1c1c" stroke-width="0.9"/>
<path d="M831.4 79.6Q831.8 70.4 838.4 70.4Q842.6 70.4 844.5 73.7" fill="none" stroke="#2b68a8" stroke-width="1.2"/><path d="M831.4 82.2V85.8" stroke="#222" stroke-width="1.1"/><rect x="830.1" y="78.3" width="2.6" height="2.6" fill="#7fb4e4" stroke="#1d4f8c" stroke-width="0.9"/><rect x="843.2" y="72.4" width="2.6" height="2.6" fill="#7fb4e4" stroke="#1d4f8c" stroke-width="0.9"/>
<path d="M854.4 80.3Q854.6 72.6 862.5 72.4" fill="none" stroke="#2b68a8" stroke-width="1.1"/><path d="M854.4 83.2V85.8M865 72.4H867.8" stroke="#222" stroke-width="1.1"/><rect x="853.1" y="79.0" width="2.6" height="2.6" fill="#7fb4e4" stroke="#1d4f8c" stroke-width="0.9"/><rect x="861.2" y="71.10000000000001" width="2.6" height="2.6" fill="#7fb4e4" stroke="#1d4f8c" stroke-width="0.9"/>
<path d="M875.4 78.5L878.4 71.5L884.6 84.4L888.3 77.7" fill="none" stroke="#8a8a8a" stroke-width="0.9"/><path d="M875.4 78.5Q877.4 71 880.6 76Q883.6 83.4 884.8 84.2Q886.6 83.6 888.3 77.7" fill="none" stroke="#222" stroke-width="1.1"/><rect x="874.1" y="77.2" width="2.6" height="2.6" fill="#fff" stroke="#1c1c1c" stroke-width="0.9"/><rect x="877.1" y="70.2" width="2.6" height="2.6" fill="#fff" stroke="#1c1c1c" stroke-width="0.9"/><rect x="883.3000000000001" y="83.10000000000001" width="2.6" height="2.6" fill="#fff" stroke="#1c1c1c" stroke-width="0.9"/><rect x="887.0" y="76.4" width="2.6" height="2.6" fill="#fff" stroke="#1c1c1c" stroke-width="0.9"/>
<ellipse cx="793.3" cy="100.6" rx="7" ry="4.2" fill="url(#gd)" stroke="#222" stroke-width="1"/><path d="M792.1 100.6H794.5M793.3 99.4V101.8" stroke="#222" stroke-width="1"/><rect x="792.0" y="95.10000000000001" width="2.6" height="2.6" fill="#fff" stroke="#1c1c1c" stroke-width="0.9"/><rect x="798.3000000000001" y="99.3" width="2.6" height="2.6" fill="#fff" stroke="#1c1c1c" stroke-width="0.9"/>
<path d="M815.4 95.4Q822.8 95.4 822.8 100Q822.8 104.6 815.4 104.6" fill="none" stroke="#222" stroke-width="1.1"/><rect x="814.1" y="94.10000000000001" width="2.6" height="2.6" fill="#fff" stroke="#1c1c1c" stroke-width="0.9"/><rect x="814.1" y="103.3" width="2.6" height="2.6" fill="#fff" stroke="#1c1c1c" stroke-width="0.9"/>
<path d="M831.4 106.7L844.5 93.4" stroke="#4fa83a" stroke-width="1.5"/><rect x="830.1" y="105.4" width="2.6" height="2.6" fill="#b8e0a8" stroke="#3f9a2c" stroke-width="0.9"/><rect x="843.2" y="92.10000000000001" width="2.6" height="2.6" fill="#b8e0a8" stroke="#3f9a2c" stroke-width="0.9"/>
<path d="M837.6 96.4V106L839.7 104L841.5 107.8L843.1 107L841.4 103.4H844.3Z" fill="#fff" stroke="#2e2e2e" stroke-width="0.9" stroke-linejoin="round"/>
<path d="M896.4 59L900.1 56L903.8 59Z" fill="#8d8d8d"/><path d="M896.4 81.6H903.8L900.1 84.8Z" fill="#8d8d8d"/><path d="M896.6 103.1H903.6" stroke="#3a3a3a" stroke-width="1.5"/><path d="M896.4 105.4H903.8L900.1 108.4Z" fill="#3a3a3a"/>
</svg>
</body></html>
